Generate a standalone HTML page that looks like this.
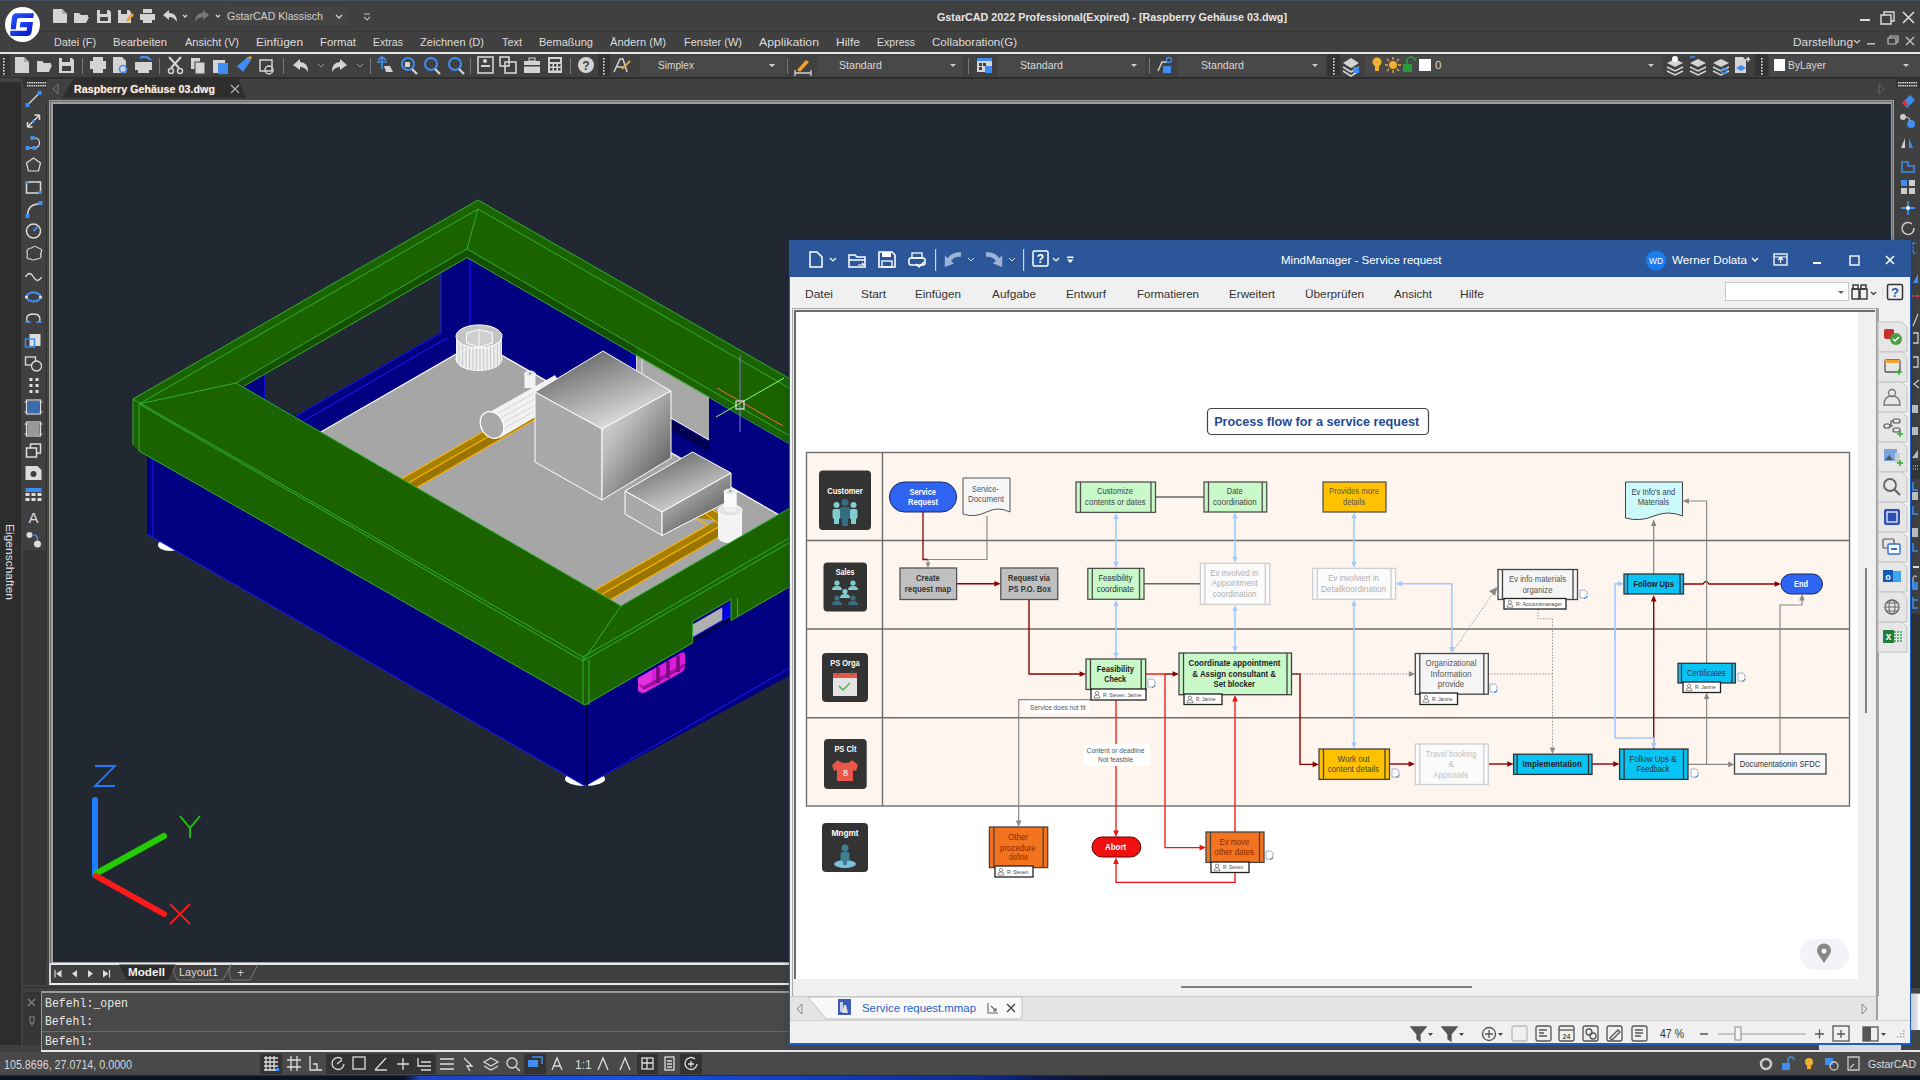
<!DOCTYPE html>
<html><head><meta charset="utf-8">
<style>
*{box-sizing:border-box;margin:0;padding:0}
html,body{width:1920px;height:1080px;overflow:hidden;background:#404040;font-family:"Liberation Sans",sans-serif}
.a{position:absolute}
.t{position:absolute;white-space:nowrap;line-height:normal}
svg{overflow:visible}
</style></head><body>
<div class="a" style="left:0;top:0;width:1920px;height:1080px;background:#404040;overflow:hidden">

<div class="a" style="left:0px;top:0px;width:1920px;height:52px;background:#404040;"></div>
<div class="a" style="left:0px;top:0px;width:1920px;height:1px;background:#465064;"></div>
<div class="a" style="left:0px;top:31px;width:1920px;height:1px;background:#383838;"></div>
<svg class="a" style="left:0px;top:0px;" width="45" height="45" viewBox="0 0 45 45"><defs><linearGradient id="lg1" x1="0" y1="0" x2="1" y2="1"><stop offset="0" stop-color="#2a5cff"/><stop offset="1" stop-color="#0010c8"/></linearGradient></defs><circle cx="22.5" cy="24.5" r="17.5" fill="#fff"/><path d="M17,13.2 L34,13.2 L33.2,18 L19,18 Q17.2,18 17,19.8 L15.8,29.2 L10.7,29.2 L11.9,17.5 Q12.5,13.2 17,13.2 Z" fill="url(#lg1)"/><path d="M10.3,30.8 L26.5,30.8 L27.2,27.3 L19.8,27.3 L20.5,22 L33,22 L31.6,32 Q30.9,35.9 27,35.9 L11.5,35.9 Q10,35.9 10.2,34 Z" fill="url(#lg1)"/></svg>
<div class="a" style="left:226px;top:6px;width:122px;height:20px;background:#444444;"></div>
<svg class="a" style="left:0px;top:0px;" width="400" height="40" viewBox="0 0 400 40"><path d="M53,9 h9 l5,5 v9 h-14 z" fill="#d4d4d4"/><path d="M62,9 v5 h5" fill="#aaa"/><path d="M74,13 h5 l2,2 h7 v2 h-12 l-2,6 z M76,17 h13 l-3,6 h-12 z" fill="#d4d4d4"/><path d="M97,10 h12 l2,2 v11 h-14 z" fill="#d4d4d4"/><rect x="100" y="10" width="7" height="4" fill="#404040"/><rect x="100" y="17" width="8" height="4" fill="#404040"/><path d="M118,10 h11 l2,2 v11 h-13 z" fill="#d4d4d4"/><rect x="121" y="10" width="6" height="4" fill="#404040"/><path d="M126,20 l6,-7 l2,2 l-6,7 z" fill="#f0a030"/><rect x="140" y="14" width="15" height="6" fill="#d4d4d4"/><rect x="143" y="9" width="9" height="4" fill="#d4d4d4"/><rect x="143" y="19" width="9" height="4" fill="#d4d4d4"/><path d="M163,15 l6,-5 v3 q8,0 8,9 q-3,-5 -8,-5 v3 z" fill="#d4d4d4"/><path d="M183,15 l2,2 l2,-2" stroke="#d4d4d4" fill="none" stroke-width="1.3"/><path d="M209,15 l-6,-5 v3 q-8,0 -8,9 q3,-5 8,-5 v3 z" fill="#777"/><path d="M216,15 l2,2 l2,-2" stroke="#d4d4d4" fill="none" stroke-width="1.3"/><path d="M336,15 l3,3 l3,-3" stroke="#d4d4d4" fill="none" stroke-width="1.3"/><path d="M364,14 h6 M364,17 l3,3 l3,-3" stroke="#bbb" fill="none" stroke-width="1.1"/></svg>
<div class="t" style="left:227.0px;top:9.7px;font-size:11.5px;color:#d0d0d0;font-weight:400;font-family:'Liberation Sans',sans-serif;transform:scaleX(0.9217);transform-origin:0 0;">GstarCAD Klassisch</div>
<div class="t" style="left:937.0px;top:10.7px;font-size:11.5px;color:#e6e6e6;font-weight:700;font-family:'Liberation Sans',sans-serif;transform:scaleX(0.9346);transform-origin:0 0;">GstarCAD 2022 Professional(Expired) - [Raspberry Gehäuse 03.dwg]</div>
<svg class="a" style="left:1850px;top:6px;" width="70" height="26" viewBox="0 0 70 26"><rect x="10" y="13" width="10" height="2" fill="#ddd"/><path d="M31,9 h10 v9 h-10 z M34,9 v-3 h10 v9 h-3" fill="none" stroke="#ddd" stroke-width="1.4"/><path d="M53,6 l11,11 M64,6 l-11,11" stroke="#ddd" stroke-width="1.6"/></svg>
<div class="t" style="left:54.0px;top:35.7px;font-size:11.5px;color:#dcdcdc;font-weight:400;font-family:'Liberation Sans',sans-serif;transform:scaleX(0.9391);transform-origin:0 0;">Datei (F)</div>
<div class="t" style="left:113.0px;top:35.7px;font-size:11.5px;color:#dcdcdc;font-weight:400;font-family:'Liberation Sans',sans-serif;transform:scaleX(0.9708);transform-origin:0 0;">Bearbeiten</div>
<div class="t" style="left:185.0px;top:35.7px;font-size:11.5px;color:#dcdcdc;font-weight:400;font-family:'Liberation Sans',sans-serif;transform:scaleX(0.9602);transform-origin:0 0;">Ansicht (V)</div>
<div class="t" style="left:256.0px;top:35.7px;font-size:11.5px;color:#dcdcdc;font-weight:400;font-family:'Liberation Sans',sans-serif;transform:scaleX(1.0353);transform-origin:0 0;">Einfügen</div>
<div class="t" style="left:320.0px;top:35.7px;font-size:11.5px;color:#dcdcdc;font-weight:400;font-family:'Liberation Sans',sans-serif;transform:scaleX(0.9885);transform-origin:0 0;">Format</div>
<div class="t" style="left:373.0px;top:35.7px;font-size:11.5px;color:#dcdcdc;font-weight:400;font-family:'Liberation Sans',sans-serif;transform:scaleX(0.9205);transform-origin:0 0;">Extras</div>
<div class="t" style="left:420.0px;top:35.7px;font-size:11.5px;color:#dcdcdc;font-weight:400;font-family:'Liberation Sans',sans-serif;transform:scaleX(0.9629);transform-origin:0 0;">Zeichnen (D)</div>
<div class="t" style="left:502.0px;top:35.7px;font-size:11.5px;color:#dcdcdc;font-weight:400;font-family:'Liberation Sans',sans-serif;transform:scaleX(0.9483);transform-origin:0 0;">Text</div>
<div class="t" style="left:539.0px;top:35.7px;font-size:11.5px;color:#dcdcdc;font-weight:400;font-family:'Liberation Sans',sans-serif;transform:scaleX(0.9600);transform-origin:0 0;">Bemaßung</div>
<div class="t" style="left:610.0px;top:35.7px;font-size:11.5px;color:#dcdcdc;font-weight:400;font-family:'Liberation Sans',sans-serif;transform:scaleX(0.9736);transform-origin:0 0;">Ändern (M)</div>
<div class="t" style="left:684.0px;top:35.7px;font-size:11.5px;color:#dcdcdc;font-weight:400;font-family:'Liberation Sans',sans-serif;transform:scaleX(0.9556);transform-origin:0 0;">Fenster (W)</div>
<div class="t" style="left:759.0px;top:35.7px;font-size:11.5px;color:#dcdcdc;font-weight:400;font-family:'Liberation Sans',sans-serif;transform:scaleX(1.0665);transform-origin:0 0;">Applikation</div>
<div class="t" style="left:836.0px;top:35.7px;font-size:11.5px;color:#dcdcdc;font-weight:400;font-family:'Liberation Sans',sans-serif;transform:scaleX(1.0433);transform-origin:0 0;">Hilfe</div>
<div class="t" style="left:877.0px;top:35.7px;font-size:11.5px;color:#dcdcdc;font-weight:400;font-family:'Liberation Sans',sans-serif;transform:scaleX(0.9148);transform-origin:0 0;">Express</div>
<div class="t" style="left:932.0px;top:35.7px;font-size:11.5px;color:#dcdcdc;font-weight:400;font-family:'Liberation Sans',sans-serif;transform:scaleX(1.0075);transform-origin:0 0;">Collaboration(G)</div>
<div class="t" style="left:1793.0px;top:35.7px;font-size:11.5px;color:#dcdcdc;font-weight:400;font-family:'Liberation Sans',sans-serif;transform:scaleX(1.0315);transform-origin:0 0;">Darstellung</div>
<svg class="a" style="left:1850px;top:34px;" width="70" height="16" viewBox="0 0 70 16"><path d="M4,6 l3,3 l3,-3" stroke="#ccc" fill="none" stroke-width="1.2"/><rect x="17" y="9" width="8" height="1.6" fill="#bbb"/><path d="M38,4 h8 v6 h-8 z M40,4 v-2 h8 v6 h-2" fill="none" stroke="#bbb" stroke-width="1.2"/><path d="M56,3 l8,8 M64,3 l-8,8" stroke="#bbb" stroke-width="1.5"/></svg>
<div class="a" style="left:0px;top:52px;width:1920px;height:2px;background:#e4e4e4;"></div>
<div class="a" style="left:0px;top:54px;width:1920px;height:24px;background:#404040;"></div>
<div class="a" style="left:0px;top:77px;width:1920px;height:2px;background:#2e2e2e;"></div>
<svg class="a" style="left:0px;top:0px;" width="1920" height="80" viewBox="0 0 1920 80"><rect x="0" y="54" width="10" height="22" fill="#353535"/><rect x="3" y="58" width="1.6" height="1.6" fill="#ddd"/><rect x="3" y="61" width="1.6" height="1.6" fill="#ddd"/><rect x="3" y="64" width="1.6" height="1.6" fill="#ddd"/><rect x="3" y="67" width="1.6" height="1.6" fill="#ddd"/><rect x="3" y="70" width="1.6" height="1.6" fill="#ddd"/><rect x="3" y="73" width="1.6" height="1.6" fill="#ddd"/><path d="M15,57 h9 l5,5 v11 h-14 z" fill="#d4d4d4"/><path d="M24,57 v5 h5" fill="#aaa"/><path d="M37,61 h5 l2,2 h7 v2 h-12 l-2,7 z M39,65 h13 l-3,7 h-12 z" fill="#d4d4d4"/><path d="M59,58 h13 l2,2 v13 h-15 z" fill="#d4d4d4"/><rect x="62" y="58" width="8" height="4" fill="#404040"/><rect x="62" y="66" width="9" height="5" fill="#404040"/><rect x="82" y="58" width="1" height="16" fill="#777"/><rect x="90" y="61" width="16" height="8" fill="#d4d4d4"/><rect x="93" y="57" width="10" height="4" fill="#d4d4d4"/><rect x="93" y="68" width="10" height="5" fill="#d4d4d4"/><path d="M113,57 h9 l4,4 v12 h-13 z" fill="#d4d4d4"/><circle cx="123" cy="69" r="3.5" fill="none" stroke="#3d8ef0" stroke-width="1.6"/><rect x="135" y="62" width="17" height="8" fill="#d4d4d4"/><path d="M140,58 q6,-3 11,2" stroke="#3d8ef0" stroke-width="2" fill="none"/><rect x="138" y="69" width="11" height="4" fill="#d4d4d4"/><rect x="159" y="58" width="1" height="16" fill="#777"/><path d="M169,57 l10,11 M181,57 l-10,11" stroke="#d4d4d4" stroke-width="2"/><circle cx="171" cy="71" r="2.5" fill="none" stroke="#d4d4d4" stroke-width="1.5"/><circle cx="180" cy="71" r="2.5" fill="none" stroke="#d4d4d4" stroke-width="1.5"/><rect x="191" y="58" width="9" height="11" fill="#d4d4d4"/><rect x="195" y="62" width="10" height="12" fill="#d4d4d4" stroke="#404040"/><rect x="213" y="60" width="12" height="13" fill="#d4d4d4"/><rect x="218" y="63" width="10" height="11" fill="#3d8ef0"/><path d="M237,66 l6,6 l8,-12 l-3,-3 z" fill="#3d8ef0"/><path d="M246,58 l5,-2 l1,3" fill="#f0a030"/><rect x="260" y="60" width="12" height="11" fill="none" stroke="#d4d4d4" stroke-width="1.5"/><circle cx="269" cy="70" r="4" fill="none" stroke="#d4d4d4" stroke-width="1.5"/><rect x="283" y="58" width="1" height="16" fill="#777"/><path d="M293,65 l7,-6 v3 q8,0 8,10 q-3,-5 -8,-5 v3 z" fill="#d4d4d4"/><path d="M318,64 l3,3 l3,-3" stroke="#999" fill="none"/><path d="M347,65 l-7,-6 v3 q-8,0 -8,10 q3,-5 8,-5 v3 z" fill="#d4d4d4"/><path d="M357,64 l3,3 l3,-3" stroke="#999" fill="none"/><rect x="370" y="58" width="1" height="16" fill="#777"/><path d="M378,60 l4,-3 l4,3 M382,57 v12 M377,62 h10" stroke="#3d8ef0" stroke-width="1.6" fill="none"/><path d="M384,66 h6 l3,6 h-7 z" fill="#d4d4d4"/><circle cx="408" cy="64" r="6" fill="none" stroke="#3d8ef0" stroke-width="2"/><path d="M412,69 l5,5" stroke="#d4d4d4" stroke-width="2.2"/><circle cx="431" cy="64" r="6" fill="none" stroke="#3d8ef0" stroke-width="2"/><path d="M435,69 l5,5" stroke="#d4d4d4" stroke-width="2.2"/><circle cx="455" cy="64" r="6" fill="none" stroke="#3d8ef0" stroke-width="2"/><path d="M459,69 l5,5" stroke="#d4d4d4" stroke-width="2.2"/><rect x="405" y="62" width="5" height="5" fill="#d4d4d4"/><rect x="470" y="58" width="1" height="16" fill="#777"/><rect x="478" y="57" width="15" height="16" fill="none" stroke="#d4d4d4" stroke-width="1.6"/><rect x="481" y="65" width="9" height="2" fill="#d4d4d4"/><circle cx="485" cy="61" r="2" fill="#d4d4d4"/><rect x="500" y="57" width="9" height="9" fill="none" stroke="#d4d4d4" stroke-width="1.6"/><rect x="505" y="62" width="11" height="11" fill="none" stroke="#d4d4d4" stroke-width="1.6"/><rect x="524" y="61" width="16" height="12" fill="#d4d4d4"/><rect x="529" y="58" width="6" height="3" fill="none" stroke="#d4d4d4"/><rect x="524" y="65" width="16" height="1.5" fill="#404040"/><rect x="548" y="57" width="14" height="16" fill="#d4d4d4"/><g fill="#404040"><rect x="550" y="59" width="10" height="3"/><rect x="550" y="64" width="2.5" height="2.5"/><rect x="554" y="64" width="2.5" height="2.5"/><rect x="558" y="64" width="2.5" height="2.5"/><rect x="550" y="68" width="2.5" height="2.5"/><rect x="554" y="68" width="2.5" height="2.5"/><rect x="558" y="68" width="2.5" height="2.5"/></g><rect x="570" y="58" width="1" height="16" fill="#777"/><circle cx="586" cy="65" r="8" fill="#d4d4d4"/><text x="586" y="70" font-size="12" font-weight="700" text-anchor="middle" fill="#404040" font-family="Liberation Sans">?</text><rect x="598" y="54" width="12" height="22" fill="#333"/><rect x="603" y="58" width="1.6" height="1.6" fill="#ddd"/><rect x="603" y="61" width="1.6" height="1.6" fill="#ddd"/><rect x="603" y="64" width="1.6" height="1.6" fill="#ddd"/><rect x="603" y="67" width="1.6" height="1.6" fill="#ddd"/><rect x="603" y="70" width="1.6" height="1.6" fill="#ddd"/><rect x="603" y="73" width="1.6" height="1.6" fill="#ddd"/><path d="M614,72 l6,-13 l3,0 l4,13 M617,67 h7" stroke="#d4d4d4" stroke-width="1.5" fill="none"/><path d="M622,69 l8,-8" stroke="#f0a030" stroke-width="2"/><rect x="640" y="56" width="145" height="20" fill="#484848"/><path d="M769,64 l3,3 l3,-3" fill="#ccc"/><path d="M769,64 h6 l-3,3 z" fill="#ccc"/><rect x="787" y="58" width="1" height="16" fill="#777"/><path d="M795,73 h16 M795,70 v6 M811,70 v6" stroke="#d4d4d4" stroke-width="1.3" fill="none"/><path d="M797,70 l9,-10 l3,2 l-9,10 z" fill="#f0a030"/><rect x="817" y="56" width="145" height="20" fill="#484848"/><path d="M950,64 h6 l-3,3 z" fill="#ccc"/><rect x="968" y="58" width="1" height="16" fill="#777"/><rect x="977" y="58" width="15" height="14" fill="#d4d4d4"/><rect x="977" y="58" width="15" height="3" fill="#3d8ef0"/><g fill="#404040"><rect x="979" y="63" width="3" height="3"/><rect x="983" y="63" width="3" height="3"/><rect x="979" y="67" width="3" height="3"/></g><rect x="985" y="66" width="7" height="7" fill="#3d8ef0"/><rect x="998" y="56" width="147" height="20" fill="#484848"/><path d="M1131,64 h6 l-3,3 z" fill="#ccc"/><rect x="1149" y="58" width="1" height="16" fill="#777"/><path d="M1158,71 l4,-9 h5" stroke="#d4d4d4" stroke-width="1.4" fill="none"/><circle cx="1169" cy="60" r="2.5" fill="none" stroke="#3d8ef0" stroke-width="1.3"/><rect x="1163" y="66" width="8" height="7" fill="#3d8ef0"/><rect x="1178" y="56" width="147" height="20" fill="#484848"/><path d="M1312,64 h6 l-3,3 z" fill="#ccc"/><rect x="1327" y="54" width="13" height="22" fill="#333"/><rect x="1333" y="58" width="1.6" height="1.6" fill="#ddd"/><rect x="1333" y="61" width="1.6" height="1.6" fill="#ddd"/><rect x="1333" y="64" width="1.6" height="1.6" fill="#ddd"/><rect x="1333" y="67" width="1.6" height="1.6" fill="#ddd"/><rect x="1333" y="70" width="1.6" height="1.6" fill="#ddd"/><rect x="1333" y="73" width="1.6" height="1.6" fill="#ddd"/><path d="M1343,63 l8,-5 l8,5 l-8,5 z" fill="#d4d4d4"/><path d="M1343,67 l8,5 l8,-5 M1343,71 l8,5 l8,-5" stroke="#d4d4d4" stroke-width="1.5" fill="none"/><rect x="1353" y="67" width="6" height="6" fill="#3d8ef0"/><rect x="1365" y="56" width="298" height="20" fill="#484848"/><circle cx="1377" cy="62" r="4.5" fill="#f0b030"/><rect x="1375" y="66" width="4" height="5" fill="#f0b030"/><circle cx="1393" cy="65" r="4" fill="#f0b030"/><g stroke="#f0b030" stroke-width="1.3"><path d="M1393,57 v3 M1393,70 v3 M1385,65 h3 M1398,65 h3 M1387,59 l2,2 M1397,69 l2,2 M1387,71 l2,-2 M1397,61 l2,-2"/></g><rect x="1403" y="64" width="9" height="8" fill="#2a9d3a"/><path d="M1407,64 v-3 q0,-4 4,-4 q4,0 4,4" stroke="#2a9d3a" stroke-width="1.6" fill="none"/><rect x="1419" y="59" width="12" height="12" fill="#fff"/><path d="M1648,64 h6 l-3,3 z" fill="#ccc"/><path d="M1667,63 l8,-4 l8,4 l-8,4 z" fill="#d4d4d4"/><path d="M1667,67 l8,4 l8,-4 M1667,71 l8,4 l8,-4" stroke="#d4d4d4" stroke-width="1.5" fill="none"/><path d="M1690,63 l8,-4 l8,4 l-8,4 z" fill="#d4d4d4"/><path d="M1690,67 l8,4 l8,-4 M1690,71 l8,4 l8,-4" stroke="#d4d4d4" stroke-width="1.5" fill="none"/><path d="M1713,63 l8,-4 l8,4 l-8,4 z" fill="#d4d4d4"/><path d="M1713,67 l8,4 l8,-4 M1713,71 l8,4 l8,-4" stroke="#d4d4d4" stroke-width="1.5" fill="none"/><circle cx="1675" cy="59" r="3" fill="#fff"/><path d="M1690,57 h5" stroke="#3d8ef0" stroke-width="1.5"/><circle cx="1724" cy="71" r="2.5" fill="none" stroke="#3d8ef0" stroke-width="1.5"/><path d="M1735,57 h8 l3,3 v13 h-11 z" fill="#d4d4d4"/><path d="M1736,68 l5,-3 l5,3 l-5,3 z" fill="#3d8ef0"/><path d="M1748,62 v-4 l-2,2 M1748,58 l2,2" stroke="#ddd" stroke-width="1.2" fill="none"/><rect x="1755" y="54" width="13" height="22" fill="#333"/><rect x="1761" y="58" width="1.6" height="1.6" fill="#ddd"/><rect x="1761" y="61" width="1.6" height="1.6" fill="#ddd"/><rect x="1761" y="64" width="1.6" height="1.6" fill="#ddd"/><rect x="1761" y="67" width="1.6" height="1.6" fill="#ddd"/><rect x="1761" y="70" width="1.6" height="1.6" fill="#ddd"/><rect x="1761" y="73" width="1.6" height="1.6" fill="#ddd"/><rect x="1770" y="56" width="150" height="20" fill="#484848"/><rect x="1774" y="59" width="11" height="12" fill="#fff"/><path d="M1903,64 h6 l-3,3 z" fill="#ccc"/></svg>
<div class="t" style="left:658.0px;top:58.7px;font-size:11.5px;color:#d8d8d8;font-weight:400;font-family:'Liberation Sans',sans-serif;transform:scaleX(0.8802);transform-origin:0 0;">Simplex</div>
<div class="t" style="left:839.0px;top:58.7px;font-size:11.5px;color:#d8d8d8;font-weight:400;font-family:'Liberation Sans',sans-serif;transform:scaleX(0.9213);transform-origin:0 0;">Standard</div>
<div class="t" style="left:1020.0px;top:58.7px;font-size:11.5px;color:#d8d8d8;font-weight:400;font-family:'Liberation Sans',sans-serif;transform:scaleX(0.9213);transform-origin:0 0;">Standard</div>
<div class="t" style="left:1201.0px;top:58.7px;font-size:11.5px;color:#d8d8d8;font-weight:400;font-family:'Liberation Sans',sans-serif;transform:scaleX(0.9213);transform-origin:0 0;">Standard</div>
<div class="t" style="left:1435.0px;top:58.7px;font-size:11.5px;color:#d8d8d8;font-weight:400;font-family:'Liberation Sans',sans-serif;">0</div>
<div class="t" style="left:1788.0px;top:58.7px;font-size:11.5px;color:#d8d8d8;font-weight:400;font-family:'Liberation Sans',sans-serif;transform:scaleX(0.9008);transform-origin:0 0;">ByLayer</div>
<div class="a" style="left:0px;top:79px;width:1920px;height:21px;background:#404040;"></div>
<svg class="a" style="left:0px;top:78px;" width="1920" height="22" viewBox="0 0 1920 22"><path d="M58,6 l-5,5 l5,5 z" fill="none" stroke="#777" stroke-width="1"/><path d="M62,20 l10,-17 q2,-3 6,-3 h160 l8,20 z" fill="#2e2e2e"/><path d="M231,7 l8,8 M239,7 l-8,8" stroke="#aaa" stroke-width="1.3"/><path d="M1879,6 l5,5 l-5,5 z" fill="none" stroke="#666" stroke-width="1"/></svg>
<div class="t" style="left:74.0px;top:82.7px;font-size:11.5px;color:#f0f0f0;font-weight:700;font-family:'Liberation Sans',sans-serif;transform:scaleX(0.9348);transform-origin:0 0;text-shadow:0 0 1px #c08040;">Raspberry Gehäuse 03.dwg</div>
<div class="a" style="left:0px;top:78px;width:21px;height:5px;background:#444;"></div>
<div class="a" style="left:0px;top:82px;width:21px;height:963px;background:#2d2d2d;"></div>
<div class="t" style="left:14.5px;top:524px;font-size:11px;line-height:11px;color:#e0e0e0;transform:rotate(90deg) scaleX(1.09);transform-origin:0 0;">Eigenschaften</div>
<div class="a" style="left:21px;top:79px;width:26px;height:972px;background:#404040;"></div>
<div class="a" style="left:46px;top:100px;width:1px;height:864px;background:#2e2e2e;"></div>
<div class="a" style="left:47px;top:100px;width:2px;height:864px;background:#474747;"></div>
<div class="a" style="left:23px;top:78px;width:24px;height:10px;background:#333;"></div>
<div class="a" style="left:23px;top:550px;width:23px;height:495px;background:#353535;"></div>
<svg class="a" style="left:0px;top:0px;" width="60" height="560" viewBox="0 0 60 560"><rect x="27.0" y="82" width="1.5" height="1.5" fill="#ddd"/><rect x="27.0" y="85" width="1.5" height="1.5" fill="#ddd"/><rect x="29.2" y="82" width="1.5" height="1.5" fill="#ddd"/><rect x="29.2" y="85" width="1.5" height="1.5" fill="#ddd"/><rect x="31.4" y="82" width="1.5" height="1.5" fill="#ddd"/><rect x="31.4" y="85" width="1.5" height="1.5" fill="#ddd"/><rect x="33.6" y="82" width="1.5" height="1.5" fill="#ddd"/><rect x="33.6" y="85" width="1.5" height="1.5" fill="#ddd"/><rect x="35.8" y="82" width="1.5" height="1.5" fill="#ddd"/><rect x="35.8" y="85" width="1.5" height="1.5" fill="#ddd"/><rect x="38.0" y="82" width="1.5" height="1.5" fill="#ddd"/><rect x="38.0" y="85" width="1.5" height="1.5" fill="#ddd"/><rect x="40.2" y="82" width="1.5" height="1.5" fill="#ddd"/><rect x="40.2" y="85" width="1.5" height="1.5" fill="#ddd"/><rect x="42.4" y="82" width="1.5" height="1.5" fill="#ddd"/><rect x="42.4" y="85" width="1.5" height="1.5" fill="#ddd"/><rect x="44.6" y="82" width="1.5" height="1.5" fill="#ddd"/><rect x="44.6" y="85" width="1.5" height="1.5" fill="#ddd"/><g transform="translate(33.5,99)"><path d="M-6,6 L6,-6" stroke="#ddd" stroke-width="1.2"/><rect x="-8" y="4" width="4" height="4" fill="#3d8ef0"/><rect x="4" y="-8" width="4" height="4" fill="#3d8ef0"/></g><g transform="translate(33.5,121)"><path d="M-6,6 L6,-6 M-6,6 l0,-5 M-6,6 l5,0 M6,-6 l0,5 M6,-6 l-5,0" stroke="#ddd" stroke-width="1.5" fill="none"/><circle cx="0" cy="0" r="1.5" fill="#3d8ef0"/></g><g transform="translate(33.5,143)"><path d="M-6,5 h6 q6,0 6,-5 q0,-5 -5,-5" stroke="#ddd" stroke-width="1.2" fill="none"/><rect x="-8" y="3" width="4" height="4" fill="#3d8ef0"/><rect x="-1" y="3" width="4" height="4" fill="#3d8ef0"/><rect x="-3" y="-7" width="4" height="4" fill="#3d8ef0"/></g><g transform="translate(33.5,165)"><path d="M0,-7 L7,-2 L5,6 L-5,6 L-7,-2 Z" stroke="#ddd" stroke-width="1.2" fill="none"/></g><g transform="translate(33.5,187)"><rect x="-7" y="-5" width="14" height="11" stroke="#ddd" stroke-width="1.5" fill="none"/><rect x="-8" y="-6" width="3" height="3" fill="#3d8ef0"/><rect x="5" y="4" width="3" height="3" fill="#3d8ef0"/></g><g transform="translate(33.5,209)"><path d="M-6,7 q0,-12 12,-12" stroke="#ddd" stroke-width="1.5" fill="none"/><rect x="-8" y="5" width="4" height="4" fill="#3d8ef0"/><rect x="5" y="-8" width="4" height="4" fill="#3d8ef0"/></g><g transform="translate(33.5,231)"><circle cx="0" cy="0" r="7" stroke="#ddd" stroke-width="1.5" fill="none"/><path d="M0,0 l4,-4" stroke="#3d8ef0" stroke-width="2"/></g><g transform="translate(33.5,253)"><path d="M-6,2 q-2,-7 4,-7 q3,-3 7,0 q5,1 2,6 q2,5 -4,5 q-3,2 -6,0 q-5,0 -3,-4" stroke="#ddd" stroke-width="1.2" fill="none"/></g><g transform="translate(33.5,275)"><path d="M-8,2 q4,-7 8,0 q4,7 8,0" stroke="#ddd" stroke-width="1.3" fill="none"/></g><g transform="translate(33.5,297)"><ellipse cx="0" cy="0" rx="7" ry="4.5" stroke="#3d8ef0" stroke-width="2.2" fill="none"/><circle cx="-7" cy="0" r="1.6" fill="#ddd"/><circle cx="7" cy="0" r="1.6" fill="#ddd"/></g><g transform="translate(33.5,319)"><path d="M-6,3 q-3,-8 6,-8 q8,0 6,8" stroke="#ddd" stroke-width="1.3" fill="none"/><path d="M-8,3 h5 M3,3 h5" stroke="#3d8ef0" stroke-width="2"/></g><g transform="translate(33.5,341)"><rect x="-4" y="-7" width="11" height="12" fill="#ddd"/><rect x="-8" y="-2" width="9" height="8" fill="none" stroke="#3d8ef0" stroke-width="1.5"/></g><g transform="translate(33.5,363)"><rect x="-8" y="-6" width="10" height="8" fill="none" stroke="#ddd" stroke-width="1.3"/><circle cx="3" cy="3" r="5" fill="#404040" stroke="#ddd" stroke-width="1.3"/></g><g transform="translate(33.5,385)"><g fill="#ddd"><rect x="-4" y="-7" width="3" height="3"/><rect x="2" y="-7" width="3" height="3"/><rect x="-4" y="-1" width="3" height="3"/><rect x="2" y="-1" width="3" height="3"/><rect x="-4" y="5" width="3" height="3"/><rect x="2" y="5" width="3" height="3"/></g></g><g transform="translate(33.5,407)"><rect x="-6" y="-6" width="12" height="12" fill="#3d6bb0"/><rect x="-7" y="-7" width="14" height="14" fill="none" stroke="#ddd" stroke-width="1.2"/><path d="M-9,-5 h3 M6,-5 h3 M-9,5 h3 M6,5 h3" stroke="#ddd"/></g><g transform="translate(33.5,429)"><rect x="-6" y="-6" width="12" height="12" fill="#999"/><rect x="-7" y="-7" width="14" height="14" fill="none" stroke="#ddd" stroke-width="1.2"/><path d="M-9,-5 h3 M6,-5 h3 M-9,5 h3 M6,5 h3" stroke="#ddd"/></g><g transform="translate(33.5,451)"><rect x="-3" y="-7" width="10" height="9" fill="none" stroke="#ddd" stroke-width="1.5"/><rect x="-7" y="-3" width="10" height="9" fill="#404040" stroke="#ddd" stroke-width="1.5"/></g><g transform="translate(33.5,473)"><path d="M-8,-7 h12 l4,4 v10 h-16 z" fill="#ddd"/><circle cx="0" cy="1" r="3" fill="#404040"/></g><g transform="translate(33.5,495)"><rect x="-8" y="-7" width="16" height="4" fill="#3d8ef0"/><g fill="#ddd"><rect x="-8" y="-2" width="4" height="3"/><rect x="-2" y="-2" width="4" height="3"/><rect x="4" y="-2" width="4" height="3"/><rect x="-8" y="3" width="4" height="3"/><rect x="-2" y="3" width="4" height="3"/><rect x="4" y="3" width="4" height="3"/></g></g><g transform="translate(33.5,517)"><text x="0" y="6" font-size="15" font-family="Liberation Sans" text-anchor="middle" fill="#ddd">A</text></g><g transform="translate(33.5,539)"><circle cx="-4" cy="-4" r="3" fill="#ddd"/><circle cx="4" cy="5" r="3.5" fill="#ddd"/><path d="M0,-4 q4,0 4,5" stroke="#3d8ef0" stroke-width="1.5" fill="none"/></g></svg>
<div class="a" style="left:1894px;top:79px;width:26px;height:972px;background:#404040;"></div>
<div class="a" style="left:1896px;top:78px;width:24px;height:10px;background:#333;"></div>
<svg class="a" style="left:0px;top:0px;" width="1920" height="240" viewBox="0 0 1920 240"><rect x="1898.0" y="82" width="1.5" height="1.5" fill="#ddd"/><rect x="1898.0" y="85" width="1.5" height="1.5" fill="#ddd"/><rect x="1900.2" y="82" width="1.5" height="1.5" fill="#ddd"/><rect x="1900.2" y="85" width="1.5" height="1.5" fill="#ddd"/><rect x="1902.4" y="82" width="1.5" height="1.5" fill="#ddd"/><rect x="1902.4" y="85" width="1.5" height="1.5" fill="#ddd"/><rect x="1904.6" y="82" width="1.5" height="1.5" fill="#ddd"/><rect x="1904.6" y="85" width="1.5" height="1.5" fill="#ddd"/><rect x="1906.8" y="82" width="1.5" height="1.5" fill="#ddd"/><rect x="1906.8" y="85" width="1.5" height="1.5" fill="#ddd"/><rect x="1909.0" y="82" width="1.5" height="1.5" fill="#ddd"/><rect x="1909.0" y="85" width="1.5" height="1.5" fill="#ddd"/><rect x="1911.2" y="82" width="1.5" height="1.5" fill="#ddd"/><rect x="1911.2" y="85" width="1.5" height="1.5" fill="#ddd"/><rect x="1913.4" y="82" width="1.5" height="1.5" fill="#ddd"/><rect x="1913.4" y="85" width="1.5" height="1.5" fill="#ddd"/><rect x="1915.6" y="82" width="1.5" height="1.5" fill="#ddd"/><rect x="1915.6" y="85" width="1.5" height="1.5" fill="#ddd"/><path d="M1902,103 l8,-8 l5,5 l-8,8 z" fill="#3d8ef0"/><path d="M1902,103 l3,3 h4 l-4,-6 z" fill="#e03030"/><circle cx="1903" cy="117" r="3" fill="#ccc"/><circle cx="1911" cy="124" r="4" fill="#3d8ef0"/><path d="M1906,117 q4,0 4,4" stroke="#ccc" fill="none"/><path d="M1905,148 l-4,0 l4,-10 z" fill="#ccc"/><path d="M1909,148 l4,0 l-4,-10 z" fill="#3d8ef0"/><path d="M1902,172 v-10 h6 v4 h6 v6 z" fill="none" stroke="#3d8ef0" stroke-width="1.5"/><rect x="1901" y="180" width="6" height="6" fill="#3d8ef0"/><rect x="1909" y="180" width="6" height="6" fill="#ccc"/><rect x="1901" y="188" width="6" height="6" fill="#ccc"/><rect x="1909" y="188" width="6" height="6" fill="#ccc"/><path d="M1908,201 v14 M1901,208 h14" stroke="#3d8ef0" stroke-width="1.8"/><circle cx="1908" cy="208" r="2" fill="#fff"/><path d="M1914,228 a6,6 0 1 1 -2,-4" stroke="#ccc" stroke-width="1.5" fill="none"/></svg>
<div class="a" style="left:49px;top:100px;width:1845px;height:865px;background:#9e9e9e;"></div>
<div class="a" style="left:50px;top:101px;width:1843px;height:863px;background:#6a6a6a;"></div>
<div class="a" style="left:51px;top:102px;width:1841px;height:861px;background:#a0a0a0;"></div>
<div class="a" style="left:53px;top:104px;width:1838px;height:858px;background:#222831;"></div>
<svg class="a" style="left:0;top:0" width="1920" height="1080"><defs>
 <clipPath id="vp"><rect x="53" y="104" width="1838" height="858"/></clipPath>
 <clipPath id="hole"><polygon points="236,383 467,249 852,472 621,606"/></clipPath>
 <linearGradient id="cubeTop" x1="0.1" y1="0" x2="0.75" y2="1">
  <stop offset="0" stop-color="#555"/><stop offset="0.85" stop-color="#d6d6d6"/><stop offset="1" stop-color="#dadada"/></linearGradient>
 <linearGradient id="cubeR" x1="0" y1="0.1" x2="0.8" y2="1">
  <stop offset="0" stop-color="#dcdcdc"/><stop offset="0.35" stop-color="#b8b8b8"/><stop offset="1" stop-color="#555"/></linearGradient>
 <linearGradient id="boxTop" x1="0.1" y1="0" x2="0.75" y2="1">
  <stop offset="0" stop-color="#555"/><stop offset="0.85" stop-color="#d0d0d0"/><stop offset="1" stop-color="#d6d6d6"/></linearGradient>
 <linearGradient id="boxR" x1="0" y1="0" x2="0.8" y2="1">
  <stop offset="0" stop-color="#d8d8d8"/><stop offset="1" stop-color="#4a4a4a"/></linearGradient>
</defs>
<g clip-path="url(#vp)">
 <!-- feet -->
 <ellipse cx="170" cy="545" rx="12" ry="6" fill="#fff"/>
 <ellipse cx="585" cy="779" rx="20" ry="7" fill="#fff"/>
 <!-- blue box outer faces -->
 <polygon points="147,452 585,705 800,581 800,670 585,786 147,534" fill="#000080"/>
 <line x1="147" y1="534" x2="585" y2="786" stroke="#1a1aff" stroke-width="1"/>
 <line x1="585" y1="786" x2="800" y2="662" stroke="#1a1aff" stroke-width="1"/>
 <line x1="153" y1="455" x2="153" y2="537" stroke="#1a1aff" stroke-width="1"/>
 <line x1="587" y1="706" x2="587" y2="786" stroke="#000040" stroke-width="2"/>
 <!-- hole contents -->
 <g clip-path="url(#hole)">
  <rect x="200" y="240" width="700" height="400" fill="#000080"/>
  <polygon points="265,374 441,272 441,332 295,416 265,399" fill="#222831"/>
  <line x1="265" y1="374" x2="265" y2="400" stroke="#1a1aff" stroke-width="1"/>
  <line x1="441" y1="272" x2="441" y2="333" stroke="#1a1aff" stroke-width="1"/>
  <line x1="296" y1="416" x2="441" y2="333" stroke="#1a1aff" stroke-width="1"/>
  <line x1="300" y1="423" x2="447" y2="338" stroke="#1a1aff" stroke-width="1"/>
  <line x1="470" y1="258" x2="470" y2="330" stroke="#1a1aff" stroke-width="1"/>
  <!-- gray back panel -->
  <polygon points="636,330 709,372 709,440 636,398" fill="#a8a8a8"/>
  <polyline points="636,330 636,398 709,440" fill="none" stroke="#fff" stroke-width="1"/><line x1="642" y1="330" x2="642" y2="400" stroke="#e8e8e8" stroke-width="1"/><polygon points="629,330 636,334 636,398 629,394" fill="#0000b0"/><line x1="671" y1="423" x2="709" y2="445" stroke="#fff" stroke-width="1"/>
  <polygon points="671,420 709,442 709,452 671,430" fill="#000050"/>
  <!-- plate -->
  <polygon points="478,341.5 900,585 478,829 56,585" fill="#a6a6a6"/>
  <polyline points="300,444 478,341.5 800,527" fill="none" stroke="#fff" stroke-width="1.2"/>
  <!-- orange tracks -->
  <polygon points="390,485.4 545,396 545,413.7 390,503" fill="#a88000"/>
  <polygon points="390,493.5 545,404 545,413.7 390,503" fill="#9a7400"/>
  <g stroke="#ffb400" stroke-width="1.1">
   <line x1="390" y1="485.4" x2="545" y2="396"/><line x1="390" y1="493.5" x2="545" y2="404"/><line x1="390" y1="503" x2="545" y2="413.7"/>
  </g>
  <polygon points="590,592.9 716.7,520.6 695.6,517.8 711.7,509.4 725,517 725,533.5 590,611.4" fill="#a88000"/>
  <polygon points="590,601.3 721,525.6 725,528 725,533.5 590,611.4" fill="#9a7400"/>
  <g stroke="#ffb400" stroke-width="1.1" fill="none">
   <polyline points="590,592.9 707.8,525 695.6,517.8 711.7,509.4 725,517"/>
   <polyline points="590,601.3 721,525.6 704.4,512.8"/>
   <line x1="590" y1="611.4" x2="725" y2="533.5"/>
  </g>
  <!-- knob -->
  <rect x="456" y="336.4" width="46" height="23" fill="#ececec"/>
  <ellipse cx="479" cy="359" rx="23" ry="11.5" fill="#ececec" stroke="#fff"/>
  <g stroke="#b8b8b8" stroke-width="0.7">
   <line x1="459" y1="342" x2="459" y2="364"/><line x1="462.5" y1="344" x2="462.5" y2="366"/><line x1="466" y1="345" x2="466" y2="368"/><line x1="469.5" y1="346" x2="469.5" y2="369"/><line x1="473" y1="347" x2="473" y2="370"/><line x1="476.5" y1="348" x2="476.5" y2="370.5"/><line x1="480" y1="348" x2="480" y2="370.5"/><line x1="483.5" y1="348" x2="483.5" y2="370.5"/><line x1="487" y1="347" x2="487" y2="370"/><line x1="490.5" y1="346" x2="490.5" y2="369"/><line x1="494" y1="345" x2="494" y2="368"/><line x1="497.5" y1="344" x2="497.5" y2="366"/><line x1="500.5" y1="342" x2="500.5" y2="364"/>
  </g>
  <ellipse cx="479" cy="336.4" rx="23" ry="11.5" fill="#c4c4c4" stroke="#fff"/>
  <polygon points="466.5,333 479,329.4 492.3,333 492.3,343 479,347.3 466.5,343" fill="#cfcfcf" stroke="#fff" stroke-width="1"/>
  <line x1="479" y1="329.4" x2="479" y2="347.3" stroke="#fff" stroke-width="0.8"/>
  <!-- post -->
  <rect x="524.5" y="374" width="11" height="14" fill="#f4f4f4"/><ellipse cx="530" cy="374" rx="5.5" ry="3" fill="#e8e8e8" stroke="#fff" stroke-width="0.8"/><circle cx="530" cy="373.5" r="1.2" fill="#999"/>
  <!-- rod -->
  <polygon points="488,413 555,375 568,398 500,438" fill="#f2f2f2"/>
  <g stroke="#b8b8b8" stroke-width="0.5">
   <line x1="490" y1="418" x2="557" y2="380"/><line x1="492" y1="423" x2="560" y2="385"/><line x1="494" y1="428" x2="562" y2="390"/><line x1="496" y1="433" x2="565" y2="394"/>
  </g>
  <ellipse cx="492" cy="425" rx="11" ry="14" transform="rotate(-30 492 425)" fill="#a8a8a8" stroke="#fff" stroke-width="1.2"/>
  <!-- cube -->
  <polygon points="603,351 671,391 602,429 535,392" fill="url(#cubeTop)" stroke="#fff" stroke-width="1"/>
  <polygon points="535,392 602,429 602,500 535,462" fill="#a9a9a9" stroke="#fff" stroke-width="1"/>
  <polygon points="602,429 671,391 671,458 602,500" fill="url(#cubeR)" stroke="#fff" stroke-width="1"/>
  <!-- small box -->
  <polygon points="692.5,452 731,473 662,512 625,491" fill="url(#boxTop)" stroke="#fff" stroke-width="1"/>
  <polygon points="625,491 662,512 662,535.5 625,514" fill="#a9a9a9" stroke="#fff" stroke-width="1"/>
  <polygon points="662,512 731,473 731,500 662,535.5" fill="url(#boxR)" stroke="#fff" stroke-width="1"/>
  <!-- standoff -->
  <rect x="718" y="510.5" width="24" height="26.7" fill="#f4f4f4"/>
  <ellipse cx="730" cy="537.2" rx="12" ry="6" fill="#f4f4f4"/>
  <ellipse cx="730" cy="510.5" rx="12" ry="6" fill="#e4e4e4" stroke="#fff"/>
  <rect x="724" y="492" width="12.7" height="18" fill="#fafafa"/>
  <ellipse cx="730.3" cy="510" rx="6.4" ry="3" fill="#f0f0f0" stroke="#ddd" stroke-width="0.6"/>
  <ellipse cx="730.3" cy="492" rx="6.4" ry="3" fill="#e8e8e8" stroke="#fff"/>
  <circle cx="730.3" cy="491" r="1.5" fill="#aaa"/>
 </g>
 <!-- green frame top surface -->
 <path d="M133,399 L478,200 L928,458 L583,657 Z M236,383 L621,606 L852,472 L467,249 Z" fill="#1b6300" fill-rule="evenodd"/>
 <polygon points="236,383 467,249 467,257.5 244,386" fill="#145000"/>
 <!-- green front faces -->
 <polygon points="133,399 583,657 585,705 139,451 133,445" fill="#1b6300"/>
 <polygon points="583,657 928,458 928,507 731,620.5 731,599.3 692.6,621.5 692.6,642.9 585,705" fill="#1b6300"/>
 <polygon points="467,249 852,471 852,479 467,257.5" fill="#1b6300"/>
 <polygon points="467,249 636,346.5 636,354.5 467,257.5" fill="#145000"/>
 <!-- notch -->
 <polygon points="692.6,621.5 731,599.3 731,620.5 692.6,642.9" fill="#000080"/>
 <polygon points="692.6,624.5 722.5,607.3 722.5,620 692.6,637.5" fill="#b0b0b0"/>
 <polygon points="722.5,607.3 731,602.5 731,616 722.5,620.5" fill="#0000e0"/>
 <polygon points="692.6,637.5 722.5,620.3 731,616 731,620.5 692.6,642.9" fill="#000050"/>
 <line x1="692.6" y1="637.5" x2="731" y2="615.5" stroke="#2020ff" stroke-width="1"/>
 <!-- magenta connector -->
 <path d="M638,678 L681,653 Q685,651 685,655 L685,667 Q685,670 682,672 L646,692 Q640,694 638,690 Z" fill="#dc1cdc"/>
 <path d="M638,678 L652,670 L652,686 L646,692 Q640,694 638,690 Z" fill="#e030e0"/>
 <path d="M638,684 L644,690 L685,667 L685,663 L644,686 Z" fill="#9a109a"/>
 <g stroke="#7a0a7a" stroke-width="3.6"><line x1="658" y1="667" x2="658" y2="683"/><line x1="668" y1="661" x2="668" y2="678"/><line x1="678" y1="655.5" x2="678" y2="672"/></g>
 <!-- green edges -->
 <g stroke="#2fb02f" stroke-width="1" fill="none">
  <polyline points="133,399 478,200 928,458"/>
  <polyline points="139,404 478,209 928,468"/>
  <polyline points="133,399 583,657 928,458"/>
  <polyline points="139,404 583,661 928,463"/>
  <polyline points="236,383 467,249 852,472"/>
  <polyline points="244,386 467,257.5 852,480"/>
  <polyline points="236,383 621,606 852,472"/>
  <line x1="139" y1="404" x2="236" y2="383"/>
  <line x1="478" y1="209" x2="467" y2="249"/>
  <line x1="583" y1="661" x2="621" y2="606"/>
  <line x1="133" y1="399" x2="133" y2="445"/>
  <line x1="139" y1="404" x2="139" y2="451"/>
  <line x1="583" y1="657" x2="583" y2="705"/>
  <line x1="589" y1="660" x2="589" y2="705"/>
  <polyline points="139,451 585,705 692.6,642.9"/>
  <polyline points="692.6,642.9 692.6,621.5 731,599.3 731,620.5 928,507"/><line x1="737.5" y1="598" x2="737.5" y2="616.8"/>
 </g>
 <!-- crosshair cursor -->
 <line x1="740" y1="355" x2="740" y2="432" stroke="#7f7fd0" stroke-width="1"/>
 <line x1="716" y1="417" x2="784" y2="378" stroke="#80ff80" stroke-width="1"/>
 <line x1="717" y1="388" x2="783" y2="426" stroke="#ff6060" stroke-width="1"/>
 <rect x="736" y="401" width="8" height="8" fill="none" stroke="#ddd" stroke-width="1.2"/>
 <!-- UCS icon -->
 <line x1="95" y1="800" x2="95" y2="875" stroke="#1e7cff" stroke-width="6" stroke-linecap="round"/>
 <line x1="97" y1="873" x2="164" y2="836" stroke="#22cc00" stroke-width="6" stroke-linecap="round"/>
 <line x1="96" y1="876" x2="164" y2="914" stroke="#ff1a1a" stroke-width="6" stroke-linecap="round"/>
 <path d="M95,766 h20 l-20,20 h20" fill="none" stroke="#1e7cff" stroke-width="1.8"/>
 <path d="M180,816 l10,12 l10,-12 M190,828 v10" fill="none" stroke="#22cc00" stroke-width="1.8"/>
 <path d="M170,904 l20,20 M190,904 l-20,20" fill="none" stroke="#ff1a1a" stroke-width="1.8"/>
</g>
</svg>
<div class="a" style="left:49px;top:963px;width:1845px;height:21px;background:#404040;"></div>
<div class="a" style="left:49px;top:963px;width:1845px;height:2px;background:#e8e8e8;"></div>
<div class="a" style="left:49px;top:983px;width:1845px;height:2px;background:#ececec;"></div>
<div class="a" style="left:49px;top:963px;width:2px;height:21px;background:#d0d0d0;"></div>
<svg class="a" style="left:0px;top:0px;" width="300" height="1000" viewBox="0 0 300 1000"><path d="M55,970 v7.5" stroke="#ddd" stroke-width="1.2"/><path d="M61.5,970 l-5.5,3.75 l5.5,3.75 z" fill="#ddd"/><path d="M77,970 l-5,3.75 l5,3.75 z" fill="#ddd"/><path d="M88,970 l5,3.75 l-5,3.75 z" fill="#ddd"/><path d="M103,970 l5.5,3.75 l-5.5,3.75 z" fill="#ddd"/><path d="M109.5,970 v7.5" stroke="#ddd" stroke-width="1.2"/><path d="M119,964.5 L127,980 H168 L175.7,964.5 z" fill="#2b2b2b"/><path d="M175.7,964.5 L173,971 L177,980 H223 L231,964.5 M231,964.5 L229,971 L231,980 H250 L258,964.5" stroke="#777" stroke-width="1" fill="none"/></svg>
<div class="t" style="left:128.0px;top:965.7px;font-size:11.5px;color:#f2f2f2;font-weight:700;font-family:'Liberation Sans',sans-serif;transform:scaleX(1.0160);transform-origin:0 0;">Modell</div>
<div class="t" style="left:179.0px;top:965.7px;font-size:11.5px;color:#dcdcdc;font-weight:400;font-family:'Liberation Sans',sans-serif;transform:scaleX(0.9530);transform-origin:0 0;">Layout1</div>
<div class="t" style="left:237.0px;top:965.5px;font-size:12px;color:#cccccc;font-weight:400;font-family:'Liberation Sans',sans-serif;">+</div>
<div class="a" style="left:22px;top:985px;width:1898px;height:7px;background:#404040;"></div>
<div class="a" style="left:22px;top:987px;width:1898px;height:1px;background:#2e2e2e;"></div>
<div class="a" style="left:0px;top:1045px;width:22px;height:7px;background:#404040;"></div>
<div class="a" style="left:41px;top:991px;width:1879px;height:61px;background:#9a9a9a;"></div>
<div class="a" style="left:42px;top:993px;width:1878px;height:58px;background:#494949;"></div>
<div class="a" style="left:42px;top:1031px;width:1878px;height:1px;background:#6a6a6a;"></div>
<div class="a" style="left:41px;top:1050px;width:1879px;height:2px;background:#e8e8e8;"></div>
<svg class="a" style="left:0px;top:0px;" width="60" height="1060" viewBox="0 0 60 1060"><path d="M28,999 l7,7 M35,999 l-7,7" stroke="#888" stroke-width="1.2"/><path d="M29,1017 h6 M30,1017 v6 h4 v-6 M32,1023 v3" stroke="#888" fill="none"/></svg>
<div class="t" style="left:45.0px;top:995.9px;font-size:13px;color:#e8e8e8;font-weight:400;font-family:'Liberation Mono',monospace;transform:scaleX(0.8866);transform-origin:0 0;">Befehl:_open</div>
<div class="t" style="left:45.0px;top:1013.9px;font-size:13px;color:#e8e8e8;font-weight:400;font-family:'Liberation Mono',monospace;transform:scaleX(0.8789);transform-origin:0 0;">Befehl:</div>
<div class="t" style="left:45.0px;top:1033.9px;font-size:13px;color:#e8e8e8;font-weight:400;font-family:'Liberation Mono',monospace;transform:scaleX(0.8789);transform-origin:0 0;">Befehl:</div>
<div class="a" style="left:0px;top:1052px;width:1920px;height:24px;background:#494949;"></div>
<div class="t" style="left:4.0px;top:1057.5px;font-size:12px;color:#d8d8d8;font-weight:400;font-family:'Liberation Sans',sans-serif;transform:scaleX(0.8922);transform-origin:0 0;">105.8696, 27.0714, 0.0000</div>
<svg class="a" style="left:0px;top:0px;" width="1920" height="1080" viewBox="0 0 1920 1080"><rect x="260" y="1054" width="22" height="20" fill="#333333"/><rect x="326" y="1054" width="110" height="20" fill="#333333"/><rect x="524" y="1054" width="22" height="20" fill="#333333"/><rect x="637" y="1054" width="21" height="20" fill="#333333"/><rect x="680" y="1054" width="22" height="20" fill="#333333"/><g stroke="#ddd" stroke-width="1.3" fill="none"><path d="M264,1058 h14 M264,1062 h14 M264,1066 h14 M264,1070 h14 M266,1056 v15 M270,1056 v15 M274,1056 v15"/><path d="M287,1060 h14 M287,1067 h14 M291,1056 v15 M297,1056 v15"/><path d="M310,1056 v14 h12 M313,1064 h4 v6"/><path d="M344,1064 a6,6 0 1 1 -2,-5 M337,1064 l5,-4"/><rect x="353" y="1057" width="12" height="12"/><path d="M375,1070 h12 M375,1070 l11,-12"/><path d="M397,1064 h12 M403,1058 v12"/><path d="M418,1058 v8 h5 M421,1062 h10 M421,1066 h10 M421,1070 h10"/><path d="M440,1059 h14 M440,1064 h14 M440,1069 h14"/><path d="M464,1058 l8,8 h-5 l3,5"/><path d="M484,1062 l7,-4 l7,4 l-7,4 z M484,1066 l7,4 l7,-4"/><circle cx="512" cy="1063" r="5"/><path d="M516,1067 l4,4"/><path d="M552,1070 l5,-12 l5,12 M554,1066 h6"/><path d="M598,1070 l5,-12 l5,12"/><path d="M620,1070 l5,-12 l5,12"/><rect x="642" y="1058" width="11" height="11"/><path d="M642,1063 h11 M647,1058 v11"/><rect x="665" y="1057" width="9" height="13"/><path d="M667,1061 h5 M667,1064 h5 M667,1067 h5"/><path d="M697,1064 a6,6 0 1 1 -2,-5 M688,1064 h6 M691,1061 v6"/></g><path d="M528,1060 h10 v7 h-10 z" fill="#3d8ef0"/><path d="M532,1057 h10 v7" stroke="#3d8ef0" fill="none" stroke-width="1.5"/><rect x="276" y="1068" width="3" height="3" fill="#3d8ef0"/><circle cx="1766" cy="1064" r="5" fill="none" stroke="#ccc" stroke-width="2.5"/><rect x="1782" y="1063" width="8" height="7" fill="#3d8ef0"/><path d="M1788,1063 v-3 q0,-3 3,-3 q3,0 3,3" stroke="#3d8ef0" stroke-width="1.5" fill="none"/><circle cx="1809" cy="1062" r="4" fill="#f0b030"/><rect x="1807" y="1065" width="4" height="4" fill="#f0b030"/><rect x="1825" y="1058" width="8" height="7" fill="#3d8ef0"/><circle cx="1834" cy="1066" r="4" fill="none" stroke="#ccc" stroke-width="1.3"/><path d="M1848,1057 h11 v13 h-11 z M1850,1068 l4,-4" stroke="#ccc" stroke-width="1.3" fill="none"/></svg>
<div class="t" style="left:575.0px;top:1057.5px;font-size:12px;color:#dddddd;font-weight:400;font-family:'Liberation Sans',sans-serif;">1:1</div>
<div class="t" style="left:1868.0px;top:1057.7px;font-size:11.5px;color:#dddddd;font-weight:400;font-family:'Liberation Sans',sans-serif;transform:scaleX(0.9161);transform-origin:0 0;">GstarCAD</div>
<div class="a" style="left:0;top:1075px;width:1920px;height:5px;background:linear-gradient(90deg,#0c1424 0,#0c1424 405px,#1a44c0 420px,#1c50e0 620px,#1240c0 800px,#0e2a90 980px,#0b1a50 1040px,#0c1424 1100px,#0c1424 100%)"></div>
<div class="a" style="left:0px;top:1075px;width:1920px;height:1px;background:#202838;"></div>
<div class="a" style="left:789px;top:240px;width:1122px;height:805px;background:#f0f0f0;box-shadow:0 0 7px 1px rgba(10,40,110,0.28);"></div>
<div class="a" style="left:789px;top:240px;width:1122px;height:805px;background:transparent;border:1px solid #1d5fc8;"></div>
<div class="a" style="left:789px;top:240px;width:1122px;height:37px;background:#2b579a;"></div>
<svg class="a" style="left:0px;top:0px;" width="1920" height="280" viewBox="0 0 1920 280"><path d="M810,252 h7 l5,5 v10 h-12 z" fill="none" stroke="#ffffff" stroke-width="1.5"/><path d="M830,258 l3,3 l3,-3" stroke="#ffffff" fill="none" stroke-width="1.2"/><path d="M849,255 h6 l2,2 h8 v10 h-16 z" fill="none" stroke="#ffffff" stroke-width="1.5"/><path d="M849,260 h16" stroke="#ffffff" stroke-width="1.5"/><path d="M858,265 h6 l-2,-2" stroke="#ffffff" stroke-width="1.2" fill="none"/><path d="M879,252 h13 l3,3 v12 h-16 z" fill="none" stroke="#ffffff" stroke-width="1.6"/><rect x="882" y="252" width="9" height="5" fill="#ffffff"/><rect x="882" y="261" width="10" height="6" fill="none" stroke="#ffffff" stroke-width="1.3"/><rect x="909" y="258" width="16" height="7" rx="2" fill="none" stroke="#ffffff" stroke-width="1.5"/><rect x="912" y="253" width="10" height="5" fill="none" stroke="#ffffff" stroke-width="1.3"/><path d="M916,264 l3,3 l5,-5" stroke="#ffffff" stroke-width="1.5" fill="none"/><rect x="935" y="249" width="1.2" height="22" fill="#c8d4e8"/><path d="M961,254.5 Q952,254 948.5,261" stroke="#9db2d4" stroke-width="4.5" fill="none"/><polygon points="944.8,255.5 944.8,267 954,263.5" fill="#9db2d4"/><path d="M968,258 l3,3 l3,-3" stroke="#e0e0d8" fill="none" stroke-width="1"/><path d="M986,254.5 Q995,254 998.5,261" stroke="#9db2d4" stroke-width="4.5" fill="none"/><polygon points="1002.2,255.5 1002.2,267 993,263.5" fill="#9db2d4"/><path d="M1009,258 l3,3 l3,-3" stroke="#e0e0d8" fill="none" stroke-width="1"/><rect x="1023" y="249" width="1.2" height="22" fill="#c8d4e8"/><rect x="1033" y="251" width="15" height="15" rx="1.5" fill="none" stroke="#ffffff" stroke-width="1.5"/><text x="1040.5" y="263" font-size="12" font-weight="700" text-anchor="middle" fill="#ffffff" font-family="Liberation Sans">?</text><path d="M1053,258 l3,3 l3,-3" stroke="#ffffff" fill="none" stroke-width="1.2"/><rect x="1067" y="256.5" width="6.5" height="1.6" fill="#fff"/><path d="M1067,259.5 h6.5 l-3.25,3.5 z" fill="#fff"/><circle cx="1656" cy="260.5" r="10" fill="#1a7df0"/><path d="M1752,258 l3,3 l3,-3" stroke="#ffffff" fill="none" stroke-width="1.3"/><rect x="1774" y="254" width="13" height="11" fill="none" stroke="#ffffff" stroke-width="1.3"/><path d="M1774,257 h13 M1780.5,263 v-5 M1778,260 l2.5,-2.5 l2.5,2.5" stroke="#ffffff" stroke-width="1.2" fill="none"/><rect x="1813" y="262" width="8" height="2" fill="#ffffff"/><rect x="1850" y="256" width="9" height="9" fill="none" stroke="#ffffff" stroke-width="1.4"/><path d="M1886,256 l8,8 M1894,256 l-8,8" stroke="#ffffff" stroke-width="1.6"/></svg>
<div class="t" style="left:1281.0px;top:253.7px;font-size:11.5px;color:#ffffff;font-weight:400;font-family:'Liberation Sans',sans-serif;">MindManager - Service request</div>
<div class="t" style="left:1649.0px;top:255.3px;font-size:9.5px;color:#ffffff;font-weight:400;font-family:'Liberation Sans',sans-serif;transform:scaleX(0.8845);transform-origin:0 0;">WD</div>
<div class="t" style="left:1672.0px;top:253.7px;font-size:11.5px;color:#ffffff;font-weight:400;font-family:'Liberation Sans',sans-serif;transform:scaleX(1.0145);transform-origin:0 0;">Werner Dolata</div>
<div class="t" style="left:805.0px;top:287.7px;font-size:11.5px;color:#333333;font-weight:400;font-family:'Liberation Sans',sans-serif;transform:scaleX(1.0430);transform-origin:0 0;">Datei</div>
<div class="t" style="left:861.0px;top:287.7px;font-size:11.5px;color:#333333;font-weight:400;font-family:'Liberation Sans',sans-serif;transform:scaleX(1.0294);transform-origin:0 0;">Start</div>
<div class="t" style="left:915.0px;top:287.7px;font-size:11.5px;color:#333333;font-weight:400;font-family:'Liberation Sans',sans-serif;transform:scaleX(1.0133);transform-origin:0 0;">Einfügen</div>
<div class="t" style="left:992.0px;top:287.7px;font-size:11.5px;color:#333333;font-weight:400;font-family:'Liberation Sans',sans-serif;transform:scaleX(1.0270);transform-origin:0 0;">Aufgabe</div>
<div class="t" style="left:1066.0px;top:287.7px;font-size:11.5px;color:#333333;font-weight:400;font-family:'Liberation Sans',sans-serif;transform:scaleX(1.0260);transform-origin:0 0;">Entwurf</div>
<div class="t" style="left:1137.0px;top:287.7px;font-size:11.5px;color:#333333;font-weight:400;font-family:'Liberation Sans',sans-serif;">Formatieren</div>
<div class="t" style="left:1229.0px;top:287.7px;font-size:11.5px;color:#333333;font-weight:400;font-family:'Liberation Sans',sans-serif;transform:scaleX(1.0139);transform-origin:0 0;">Erweitert</div>
<div class="t" style="left:1305.0px;top:287.7px;font-size:11.5px;color:#333333;font-weight:400;font-family:'Liberation Sans',sans-serif;transform:scaleX(1.0255);transform-origin:0 0;">Überprüfen</div>
<div class="t" style="left:1394.0px;top:287.7px;font-size:11.5px;color:#333333;font-weight:400;font-family:'Liberation Sans',sans-serif;transform:scaleX(1.0077);transform-origin:0 0;">Ansicht</div>
<div class="t" style="left:1460.0px;top:287.7px;font-size:11.5px;color:#333333;font-weight:400;font-family:'Liberation Sans',sans-serif;transform:scaleX(1.0433);transform-origin:0 0;">Hilfe</div>
<svg class="a" style="left:0px;top:0px;" width="1920" height="310" viewBox="0 0 1920 310"><rect x="1725.5" y="282.5" width="123" height="18" fill="#fff" stroke="#c8c8c8"/><path d="M1838,291 h6 l-3,3 z" fill="#666"/><g fill="none" stroke="#333" stroke-width="1.4"><rect x="1853" y="285" width="5" height="4"/><rect x="1861" y="285" width="5" height="4"/><rect x="1852" y="289" width="7" height="10"/><rect x="1860" y="289" width="7" height="10"/><path d="M1859,293 h1"/></g><path d="M1871,292 l2.5,2.5 l2.5,-2.5" stroke="#333" fill="none" stroke-width="1.2"/><rect x="1882" y="287" width="1" height="12" fill="#ddd"/><rect x="1887.5" y="284.5" width="15" height="15" rx="1.5" fill="none" stroke="#333" stroke-width="1.5"/><text x="1895" y="297" font-size="13" font-weight="700" text-anchor="middle" fill="#1c5bb8" font-family="Liberation Sans">?</text></svg>
<div class="a" style="left:792px;top:308px;width:1087px;height:688px;background:#a8a8a8;"></div>
<div class="a" style="left:793px;top:309px;width:1085px;height:687px;background:#eeeeee;"></div>
<div class="a" style="left:794px;top:310px;width:1081px;height:686px;background:#f0f0f0;"></div>
<div class="a" style="left:794px;top:310px;width:1081px;height:2px;background:#6a6a6a;"></div>
<div class="a" style="left:794px;top:310px;width:2px;height:669px;background:#6a6a6a;"></div>
<div class="a" style="left:796px;top:312px;width:1062px;height:667px;background:#ffffff;"></div>
<div class="a" style="left:1876px;top:308px;width:2px;height:713px;background:#a0a0a0;"></div>
<div class="a" style="left:1865px;top:568px;width:2px;height:145px;background:#808080;"></div>
<div class="a" style="left:1181px;top:986px;width:291px;height:2px;background:#808080;"></div>
<svg class="a" style="left:0px;top:0px;" width="1920" height="1000" viewBox="0 0 1920 1000"><rect x="1207.5" y="408.5" width="221" height="26" rx="4" fill="#fff" stroke="#444" stroke-width="1.2"/><text x="1316.7" y="426.4" font-size="13.5" font-weight="700" fill="#1f4a94" text-anchor="middle" font-family="Liberation Sans" textLength="205.0" lengthAdjust="spacingAndGlyphs">Process flow for a service request</text><rect x="806.5" y="452.5" width="1043" height="353.5" fill="#fef5ef" stroke="#6e6e6e" stroke-width="1.4"/><path d="M882.5,452.5 V806 M806.5,540.5 H1849.5 M806.5,629 H1849.5 M806.5,717.7 H1849.5" stroke="#6e6e6e" stroke-width="1.4"/><rect x="819.0" y="470.5" width="52.0" height="59.5" rx="4" fill="#333333"/><text x="845.0" y="494.1" font-size="8.5" font-weight="700" fill="#fff" text-anchor="middle" font-family="Liberation Sans" textLength="35.6" lengthAdjust="spacingAndGlyphs">Customer</text><g fill="#80cdd0"><circle cx="836.5" cy="505" r="3"/><rect x="832.5" y="509" width="8" height="10" rx="2"/><rect x="834" y="517" width="5" height="7"/><circle cx="853.5" cy="505" r="3"/><rect x="849.5" y="509" width="8" height="10" rx="2"/><rect x="851" y="517" width="5" height="7"/></g><g fill="#346c82"><circle cx="845" cy="502.5" r="3.5"/><rect x="840" y="507" width="10" height="12" rx="2"/><rect x="842" y="517" width="6" height="9"/></g><rect x="823.5" y="562.5" width="43.5" height="49.0" rx="4" fill="#333333"/><text x="845.2" y="575.1" font-size="8.5" font-weight="700" fill="#fff" text-anchor="middle" font-family="Liberation Sans" textLength="18.7" lengthAdjust="spacingAndGlyphs">Sales</text><g fill="#80cdd0"><circle cx="837" cy="583" r="2.6"/><path d="M832,590 q0,-4 5,-4 q5,0 5,4 z"/><circle cx="853" cy="583" r="2.6"/><path d="M848,590 q0,-4 5,-4 q5,0 5,4 z"/><circle cx="845" cy="591.5" r="2.6"/><path d="M840,598 q0,-4 5,-4 q5,0 5,4 z"/></g><g fill="#3a6f80"><circle cx="837" cy="598" r="2.6"/><path d="M832,605 q0,-4 5,-4 q5,0 5,4 z"/><circle cx="853" cy="598" r="2.6"/><path d="M848,605 q0,-4 5,-4 q5,0 5,4 z"/></g><rect x="822.0" y="653.0" width="46.0" height="49.0" rx="4" fill="#333333"/><text x="845.0" y="665.6" font-size="8.5" font-weight="700" fill="#fff" text-anchor="middle" font-family="Liberation Sans" textLength="29.4" lengthAdjust="spacingAndGlyphs">PS Orga</text><rect x="833" y="673" width="24" height="23" fill="#e4e4e4"/><rect x="833" y="673" width="24" height="5" fill="#e8574a"/><path d="M838,671 v4 M852,671 v4" stroke="#555" stroke-width="1.2"/><path d="M839,686 l4,4 l7,-7" stroke="#48b050" stroke-width="1.5" fill="none"/><rect x="824.0" y="739.0" width="42.7" height="50.0" rx="4" fill="#333333"/><text x="845.4" y="752.4" font-size="8.5" font-weight="700" fill="#fff" text-anchor="middle" font-family="Liberation Sans" textLength="22.0" lengthAdjust="spacingAndGlyphs">PS Clt</text><path d="M838,760 l-6,5 l2,6 l3,-1 v11 h16 v-11 l3,1 l2,-6 l-6,-5 q-2,3 -7,3 q-5,0 -7,-3 z" fill="#e8574a"/><text x="845.5" y="776.2" font-size="9.0" font-weight="400" fill="#fff" text-anchor="middle" font-family="Liberation Sans">8</text><rect x="822.0" y="823.0" width="46.0" height="49.0" rx="4" fill="#333333"/><text x="845.0" y="836.0" font-size="8.5" font-weight="700" fill="#fff" text-anchor="middle" font-family="Liberation Sans" textLength="27.0" lengthAdjust="spacingAndGlyphs">Mngmt</text><ellipse cx="845" cy="864" rx="11" ry="4" fill="#7cc0e0"/><circle cx="845" cy="848" r="3.5" fill="#3f7f90"/><rect x="840.5" y="852" width="9" height="9" rx="2" fill="#3f7f90"/><rect x="843" y="858" width="4" height="7" fill="#3f7f90"/><polyline points="923.0,512.0 923.0,559.5 928.0,559.5" fill="none" stroke="#8c0000" stroke-width="1.3"/><polyline points="987.0,516.0 987.0,559.5 928.0,559.5 928.0,563.0" fill="none" stroke="#8a8a8a" stroke-width="1.2"/><polygon points="928.0,568.0 925.5,562.4 930.5,562.4" fill="#8a8a8a"/><polyline points="956.6,583.7 995.0,583.7" fill="none" stroke="#8c0000" stroke-width="1.4"/><polygon points="1000.8,583.7 994.4,580.9 994.4,586.5" fill="#8c0000"/><polyline points="1029.0,599.5 1029.0,674.0 1080.0,674.0" fill="none" stroke="#8c0000" stroke-width="1.4"/><polygon points="1086.0,674.0 1079.6,671.2 1079.6,676.8" fill="#8c0000"/><polyline points="1145.7,674.0 1165.0,674.0" fill="none" stroke="#f01010" stroke-width="1.4"/><polyline points="1165.0,674.0 1173.0,674.0" fill="none" stroke="#8c0000" stroke-width="1.4"/><polygon points="1179.0,674.0 1172.6,671.2 1172.6,676.8" fill="#8c0000"/><polyline points="1291.5,674.0 1300.0,674.0 1300.0,764.4 1313.0,764.4" fill="none" stroke="#8c0000" stroke-width="1.4"/><polygon points="1319.0,764.4 1312.6,761.6 1312.6,767.2" fill="#8c0000"/><polyline points="1389.5,764.0 1409.0,764.0" fill="none" stroke="#8c0000" stroke-width="1.4"/><polygon points="1415.0,764.0 1408.6,761.2 1408.6,766.8" fill="#8c0000"/><polyline points="1488.3,764.0 1507.0,764.0" fill="none" stroke="#8c0000" stroke-width="1.4"/><polygon points="1513.6,764.0 1507.2,761.2 1507.2,766.8" fill="#8c0000"/><polyline points="1592.0,764.0 1613.0,764.0" fill="none" stroke="#8c0000" stroke-width="1.4"/><polygon points="1619.6,764.0 1613.2,761.2 1613.2,766.8" fill="#8c0000"/><polyline points="1653.7,749.0 1653.7,601.0" fill="none" stroke="#8c0000" stroke-width="1.4"/><polygon points="1653.7,595.0 1650.9,601.4 1656.5,601.4" fill="#8c0000"/><path d="M1683.5,584 H1703 q3,-5 6,0 H1775" fill="none" stroke="#8c0000" stroke-width="1.4"/><polygon points="1781.0,584.0 1774.6,581.2 1774.6,586.8" fill="#8c0000"/><polyline points="1116.0,700.0 1116.0,831.0" fill="none" stroke="#f01010" stroke-width="1.3"/><polygon points="1116.0,837.0 1113.2,830.6 1118.8,830.6" fill="#f01010"/><polyline points="1165.0,674.0 1165.0,847.6 1200.0,847.6" fill="none" stroke="#f01010" stroke-width="1.3"/><polygon points="1206.0,847.6 1199.6,844.8 1199.6,850.4" fill="#f01010"/><polyline points="1235.0,832.0 1235.0,701.0" fill="none" stroke="#f01010" stroke-width="1.3"/><polygon points="1235.0,695.0 1232.2,701.4 1237.8,701.4" fill="#f01010"/><polyline points="1235.0,872.0 1235.0,882.4 1116.0,882.4 1116.0,863.0" fill="none" stroke="#f01010" stroke-width="1.3"/><polygon points="1116.0,857.5 1113.2,863.9 1118.8,863.9" fill="#f01010"/><polyline points="1091.0,699.6 1018.7,699.6 1018.7,821.0" fill="none" stroke="#8a8a8a" stroke-width="1.2"/><polygon points="1018.7,827.0 1015.9,820.6 1021.5,820.6" fill="#8a8a8a"/><polyline points="1653.7,574.0 1653.7,525.0" fill="none" stroke="#8a8a8a" stroke-width="1.3"/><polygon points="1653.7,519.5 1650.9,525.9 1656.5,525.9" fill="#8a8a8a"/><polyline points="1688.0,764.4 1728.0,764.4" fill="none" stroke="#8a8a8a" stroke-width="1.2"/><polygon points="1734.5,764.4 1728.1,761.6 1728.1,767.2" fill="#8a8a8a"/><polyline points="1706.6,764.4 1706.6,698.0" fill="none" stroke="#8a8a8a" stroke-width="1.2"/><polygon points="1706.6,692.5 1703.8,698.9 1709.4,698.9" fill="#8a8a8a"/><polyline points="1706.6,663.0 1706.6,501.0 1688.0,501.0" fill="none" stroke="#8a8a8a" stroke-width="1.2"/><polygon points="1682.5,501.0 1688.9,498.2 1688.9,503.8" fill="#8a8a8a"/><polyline points="1780.0,754.0 1780.0,605.0 1802.0,605.0 1802.0,600.0" fill="none" stroke="#8a8a8a" stroke-width="1.2"/><polygon points="1802.0,594.0 1799.2,600.4 1804.8,600.4" fill="#8a8a8a"/><polyline points="1155.5,497.0 1204.0,497.0" fill="none" stroke="#666" stroke-width="1.6"/><polyline points="1144.0,583.7 1200.4,583.7" fill="none" stroke="#666" stroke-width="1.6"/><polyline points="1116.0,517.4 1116.0,563.4" fill="none" stroke="#9fcbff" stroke-width="1.6"/><polygon points="1116.0,512.9 1113.3,519.0 1118.7,519.0" fill="#9fcbff"/><polygon points="1116.0,567.9 1113.3,561.8 1118.7,561.8" fill="#9fcbff"/><polyline points="1235.0,517.0 1235.0,558.3" fill="none" stroke="#9fcbff" stroke-width="1.6"/><polygon points="1235.0,512.5 1232.3,518.6 1237.7,518.6" fill="#9fcbff"/><polygon points="1235.0,562.8 1232.3,556.7 1237.7,556.7" fill="#9fcbff"/><polyline points="1354.0,517.0 1354.0,563.4" fill="none" stroke="#9fcbff" stroke-width="1.6"/><polygon points="1354.0,512.5 1351.3,518.6 1356.7,518.6" fill="#9fcbff"/><polygon points="1354.0,567.9 1351.3,561.8 1356.7,561.8" fill="#9fcbff"/><polyline points="1116.0,604.3 1116.0,654.0" fill="none" stroke="#9fcbff" stroke-width="1.6"/><polygon points="1116.0,599.8 1113.3,605.9 1118.7,605.9" fill="#9fcbff"/><polygon points="1116.0,658.5 1113.3,652.4 1118.7,652.4" fill="#9fcbff"/><polyline points="1235.0,609.4 1235.0,648.0" fill="none" stroke="#9fcbff" stroke-width="1.6"/><polygon points="1235.0,604.9 1232.3,611.0 1237.7,611.0" fill="#9fcbff"/><polygon points="1235.0,652.5 1232.3,646.4 1237.7,646.4" fill="#9fcbff"/><polyline points="1354.0,604.3 1354.0,744.0" fill="none" stroke="#9fcbff" stroke-width="1.6"/><polygon points="1354.0,599.8 1351.3,605.9 1356.7,605.9" fill="#9fcbff"/><polygon points="1354.0,748.5 1351.3,742.4 1356.7,742.4" fill="#9fcbff"/><polyline points="1451.8,647.0 1451.8,583.7 1401.0,583.7" fill="none" stroke="#9fcbff" stroke-width="1.6"/><polygon points="1395.6,583.7 1401.7,581.0 1401.7,586.4" fill="#9fcbff"/><polygon points="1451.8,653.0 1449.1,646.9 1454.4,646.9" fill="#9fcbff"/><polyline points="1615.0,640.0 1615.0,583.7 1618.0,583.7" fill="none" stroke="#9fcbff" stroke-width="1.6"/><polygon points="1624.0,583.7 1617.9,581.0 1617.9,586.4" fill="#9fcbff"/><polyline points="1615.0,630.0 1615.0,738.0 1653.7,738.0 1653.7,743.0" fill="none" stroke="#9fcbff" stroke-width="1.6"/><polygon points="1653.7,749.0 1651.0,742.9 1656.4,742.9" fill="#9fcbff"/><polyline points="1291.5,674.0 1409.0,674.0" fill="none" stroke="#999" stroke-width="1.0" stroke-dasharray="1.5,1.5"/><polygon points="1415.3,674.0 1408.9,671.2 1408.9,676.8" fill="#8a8a8a"/><polyline points="1488.3,674.0 1552.5,674.0 1552.5,748.0" fill="none" stroke="#999" stroke-width="1.0" stroke-dasharray="1.5,1.5"/><polygon points="1552.5,754.0 1549.7,747.6 1555.3,747.6" fill="#8a8a8a"/><polyline points="1538.0,609.0 1538.0,618.8 1552.5,618.8 1552.5,674.0" fill="none" stroke="#999" stroke-width="1.0" stroke-dasharray="1.5,1.5"/><polyline points="1453.0,651.0 1494.0,592.0" fill="none" stroke="#999" stroke-width="1.0" stroke-dasharray="1.5,1.5"/><polygon points="1497.5,587 1489,591 1495,596" fill="#8a8a8a"/><rect x="889.4" y="482.0" width="67.2" height="30.0" rx="15.0" fill="#2f63f2" stroke="#1a2a60" stroke-width="1"/><text x="922.7" y="494.5" font-size="8.5" font-weight="700" fill="#fff" text-anchor="middle" font-family="Liberation Sans" textLength="26.4" lengthAdjust="spacingAndGlyphs">Service</text><text x="923.0" y="505.1" font-size="8.5" font-weight="700" fill="#fff" text-anchor="middle" font-family="Liberation Sans" textLength="30.0" lengthAdjust="spacingAndGlyphs">Request</text><path d="M963.0,478.0 H1010.0 V512.0 Q998.2,506.0 986.5,512.0 T963.0,514.0 Z" fill="#f6f6f6" stroke="#555" stroke-width="1"/><text x="985.4" y="491.7" font-size="8.5" font-weight="400" fill="#555" text-anchor="middle" font-family="Liberation Sans" textLength="26.6" lengthAdjust="spacingAndGlyphs">Service-</text><text x="986.0" y="501.9" font-size="8.5" font-weight="400" fill="#555" text-anchor="middle" font-family="Liberation Sans" textLength="36.0" lengthAdjust="spacingAndGlyphs">Document</text><rect x="1076.0" y="482.0" width="79.5" height="30.4" fill="#c9f8c9" stroke="#505050" stroke-width="1.3"/><path d="M1080.5,482.0 v30.4 M1151.0,482.0 v30.4" stroke="#505050" stroke-width="1.3"/><text x="1115.0" y="494.1" font-size="8.5" font-weight="400" fill="#444" text-anchor="middle" font-family="Liberation Sans" textLength="36.0" lengthAdjust="spacingAndGlyphs">Customize</text><text x="1115.3" y="505.1" font-size="8.5" font-weight="400" fill="#444" text-anchor="middle" font-family="Liberation Sans" textLength="60.4" lengthAdjust="spacingAndGlyphs">contents or dates</text><rect x="1204.0" y="482.0" width="62.7" height="30.0" fill="#c9f8c9" stroke="#505050" stroke-width="1.3"/><path d="M1208.5,482.0 v30.0 M1262.2,482.0 v30.0" stroke="#505050" stroke-width="1.3"/><text x="1234.7" y="494.1" font-size="8.5" font-weight="400" fill="#444" text-anchor="middle" font-family="Liberation Sans" textLength="16.0" lengthAdjust="spacingAndGlyphs">Date</text><text x="1234.9" y="505.1" font-size="8.5" font-weight="400" fill="#444" text-anchor="middle" font-family="Liberation Sans" textLength="43.7" lengthAdjust="spacingAndGlyphs">coordination</text><rect x="1323" y="482" width="63" height="30" fill="#ffc100" stroke="#555" stroke-width="1.3"/><text x="1354.0" y="494.1" font-size="8.5" font-weight="400" fill="#555" text-anchor="middle" font-family="Liberation Sans" textLength="50.0" lengthAdjust="spacingAndGlyphs">Provides more</text><text x="1354.0" y="505.1" font-size="8.5" font-weight="400" fill="#555" text-anchor="middle" font-family="Liberation Sans" textLength="22.0" lengthAdjust="spacingAndGlyphs">details</text><path d="M1625.5,482.0 H1682.5 V516.0 Q1668.2,510.0 1654.0,516.0 T1625.5,518.0 Z" fill="#cdf9fb" stroke="#444" stroke-width="1"/><text x="1653.3" y="495.1" font-size="8.5" font-weight="400" fill="#444" text-anchor="middle" font-family="Liberation Sans" textLength="43.8" lengthAdjust="spacingAndGlyphs">Ev Info's and</text><text x="1653.4" y="505.1" font-size="8.5" font-weight="400" fill="#444" text-anchor="middle" font-family="Liberation Sans" textLength="31.5" lengthAdjust="spacingAndGlyphs">Materials</text><rect x="900" y="568" width="56.6" height="31.5" fill="#c0c0c0" stroke="#555" stroke-width="1.3"/><text x="927.9" y="581.1" font-size="8.5" font-weight="700" fill="#333" text-anchor="middle" font-family="Liberation Sans" textLength="23.6" lengthAdjust="spacingAndGlyphs">Create</text><text x="928.0" y="591.5" font-size="8.5" font-weight="700" fill="#333" text-anchor="middle" font-family="Liberation Sans" textLength="46.3" lengthAdjust="spacingAndGlyphs">request map</text><rect x="1000.8" y="568" width="56.9" height="31.5" fill="#c0c0c0" stroke="#555" stroke-width="1.3"/><text x="1029.0" y="581.1" font-size="8.5" font-weight="700" fill="#333" text-anchor="middle" font-family="Liberation Sans" textLength="42.0" lengthAdjust="spacingAndGlyphs">Request via</text><text x="1029.8" y="591.5" font-size="8.5" font-weight="700" fill="#333" text-anchor="middle" font-family="Liberation Sans" textLength="42.6" lengthAdjust="spacingAndGlyphs">PS P.O. Box</text><rect x="1087.8" y="568.4" width="56.2" height="30.9" fill="#c9f8c9" stroke="#505050" stroke-width="1.3"/><path d="M1092.3,568.4 v30.9 M1139.5,568.4 v30.9" stroke="#505050" stroke-width="1.3"/><text x="1115.3" y="580.9" font-size="8.5" font-weight="400" fill="#333" text-anchor="middle" font-family="Liberation Sans" textLength="33.8" lengthAdjust="spacingAndGlyphs">Feasibility</text><text x="1115.3" y="591.5" font-size="8.5" font-weight="400" fill="#333" text-anchor="middle" font-family="Liberation Sans" textLength="37.3" lengthAdjust="spacingAndGlyphs">coordinate</text><rect x="1200.4" y="563.3" width="69.4" height="41.1" fill="#fbfbfb" stroke="#cfcfcf" stroke-width="1.3"/><path d="M1204.9,563.3 v41.1 M1265.3,563.3 v41.1" stroke="#cfcfcf" stroke-width="1.3"/><text x="1234.2" y="576.0" font-size="8.5" font-weight="400" fill="#b0b0b0" text-anchor="middle" font-family="Liberation Sans" textLength="47.8" lengthAdjust="spacingAndGlyphs">Ev involved in</text><text x="1234.8" y="586.4" font-size="8.5" font-weight="400" fill="#b0b0b0" text-anchor="middle" font-family="Liberation Sans" textLength="46.0" lengthAdjust="spacingAndGlyphs">Appointment</text><text x="1234.5" y="596.9" font-size="8.5" font-weight="400" fill="#b0b0b0" text-anchor="middle" font-family="Liberation Sans" textLength="43.7" lengthAdjust="spacingAndGlyphs">coordination</text><rect x="1312.7" y="568.4" width="82.9" height="30.9" fill="#fbfbfb" stroke="#cfcfcf" stroke-width="1.3"/><path d="M1317.2,568.4 v30.9 M1391.1,568.4 v30.9" stroke="#cfcfcf" stroke-width="1.3"/><text x="1353.5" y="580.9" font-size="8.5" font-weight="400" fill="#b0b0b0" text-anchor="middle" font-family="Liberation Sans" textLength="50.7" lengthAdjust="spacingAndGlyphs">Ev involviert in</text><text x="1353.5" y="591.5" font-size="8.5" font-weight="400" fill="#b0b0b0" text-anchor="middle" font-family="Liberation Sans" textLength="65.0" lengthAdjust="spacingAndGlyphs">Detailkoordination</text><rect x="1498.0" y="569.5" width="79.5" height="30.0" fill="#f5f5f5" stroke="#444" stroke-width="1.3"/><path d="M1502.5,569.5 v30.0 M1573.0,569.5 v30.0" stroke="#444" stroke-width="1.3"/><text x="1537.5" y="582.1" font-size="8.5" font-weight="400" fill="#555" text-anchor="middle" font-family="Liberation Sans" textLength="57.0" lengthAdjust="spacingAndGlyphs">Ev info materials</text><text x="1537.5" y="592.8" font-size="8.5" font-weight="400" fill="#555" text-anchor="middle" font-family="Liberation Sans" textLength="30.0" lengthAdjust="spacingAndGlyphs">organize</text><rect x="1504.0" y="598.5" width="62.0" height="10.5" fill="#fff" stroke="#222" stroke-width="1.3"/><circle cx="1510.0" cy="602.2" r="1.7" fill="none" stroke="#666" stroke-width="0.7"/><path d="M1507.0,607.2 q0,-3 3,-3 q3,0 3,3 z" fill="none" stroke="#666" stroke-width="0.7"/><text x="1539.0" y="605.7" font-size="5.5" font-weight="400" fill="#444" text-anchor="middle" font-family="Liberation Sans" textLength="46.0" lengthAdjust="spacingAndGlyphs">R: Accountmanager</text><path d="M1580.0,590.0 h5 l2,2 v6 h-7 z" fill="#fff" stroke="#8aa0c0" stroke-width="0.8"/><path d="M1584.0,599.0 l3,-3" stroke="#3a80d0" stroke-width="1"/><rect x="1624.0" y="574.0" width="59.5" height="20.0" fill="#08c4f4" stroke="#333" stroke-width="1.3"/><path d="M1627.5,574.0 v20.0 M1680.0,574.0 v20.0" stroke="#333" stroke-width="1.3"/><text x="1653.7" y="586.6" font-size="8.5" font-weight="700" fill="#222" text-anchor="middle" font-family="Liberation Sans" textLength="40.5" lengthAdjust="spacingAndGlyphs">Follow Ups</text><rect x="1781.0" y="574.0" width="41.5" height="20.0" rx="10.0" fill="#2f63f2" stroke="#1a2a60" stroke-width="1"/><text x="1801.0" y="586.6" font-size="8.5" font-weight="700" fill="#fff" text-anchor="middle" font-family="Liberation Sans" textLength="14.0" lengthAdjust="spacingAndGlyphs">End</text><rect x="1086.0" y="659.0" width="59.7" height="30.5" fill="#c9f8c9" stroke="#444" stroke-width="1.3"/><path d="M1090.5,659.0 v30.5 M1141.2,659.0 v30.5" stroke="#444" stroke-width="1.3"/><text x="1115.4" y="671.6" font-size="8.5" font-weight="700" fill="#222" text-anchor="middle" font-family="Liberation Sans" textLength="37.3" lengthAdjust="spacingAndGlyphs">Feasibility</text><text x="1115.2" y="681.7" font-size="8.5" font-weight="700" fill="#222" text-anchor="middle" font-family="Liberation Sans" textLength="22.0" lengthAdjust="spacingAndGlyphs">Check</text><rect x="1091.0" y="689.0" width="55.0" height="11.0" fill="#fff" stroke="#222" stroke-width="1.3"/><circle cx="1097.0" cy="693.0" r="1.7" fill="none" stroke="#666" stroke-width="0.7"/><path d="M1094.0,698.0 q0,-3 3,-3 q3,0 3,3 z" fill="none" stroke="#666" stroke-width="0.7"/><text x="1122.3" y="696.5" font-size="5.5" font-weight="400" fill="#444" text-anchor="middle" font-family="Liberation Sans" textLength="38.6" lengthAdjust="spacingAndGlyphs">R: Steven, Janine</text><path d="M1148.0,679.0 h5 l2,2 v6 h-7 z" fill="#fff" stroke="#8aa0c0" stroke-width="0.8"/><path d="M1152.0,688.0 l3,-3" stroke="#3a80d0" stroke-width="1"/><rect x="1179.0" y="653.0" width="112.5" height="41.7" fill="#c9f8c9" stroke="#444" stroke-width="1.3"/><path d="M1183.5,653.0 v41.7 M1287.0,653.0 v41.7" stroke="#444" stroke-width="1.3"/><text x="1234.5" y="666.1" font-size="8.5" font-weight="700" fill="#222" text-anchor="middle" font-family="Liberation Sans" textLength="92.0" lengthAdjust="spacingAndGlyphs">Coordinate appointment</text><text x="1234.2" y="676.8" font-size="8.5" font-weight="700" fill="#222" text-anchor="middle" font-family="Liberation Sans" textLength="83.7" lengthAdjust="spacingAndGlyphs">&amp; Assign consultant &amp;</text><text x="1234.3" y="687.1" font-size="8.5" font-weight="700" fill="#222" text-anchor="middle" font-family="Liberation Sans" textLength="41.5" lengthAdjust="spacingAndGlyphs">Set blocker</text><rect x="1184.0" y="694.0" width="38.0" height="10.5" fill="#fff" stroke="#222" stroke-width="1.3"/><circle cx="1190.0" cy="697.8" r="1.7" fill="none" stroke="#666" stroke-width="0.7"/><path d="M1187.0,702.8 q0,-3 3,-3 q3,0 3,3 z" fill="none" stroke="#666" stroke-width="0.7"/><text x="1205.8" y="701.2" font-size="5.5" font-weight="400" fill="#444" text-anchor="middle" font-family="Liberation Sans" textLength="19.7" lengthAdjust="spacingAndGlyphs">R: Janine</text><rect x="1415.3" y="653.5" width="73.0" height="40.7" fill="#f5f5f5" stroke="#444" stroke-width="1.3"/><path d="M1419.8,653.5 v40.7 M1483.8,653.5 v40.7" stroke="#444" stroke-width="1.3"/><text x="1451.0" y="666.4" font-size="8.5" font-weight="400" fill="#555" text-anchor="middle" font-family="Liberation Sans" textLength="50.8" lengthAdjust="spacingAndGlyphs">Organizational</text><text x="1451.0" y="676.8" font-size="8.5" font-weight="400" fill="#555" text-anchor="middle" font-family="Liberation Sans" textLength="41.0" lengthAdjust="spacingAndGlyphs">Information</text><text x="1451.0" y="686.9" font-size="8.5" font-weight="400" fill="#555" text-anchor="middle" font-family="Liberation Sans" textLength="26.7" lengthAdjust="spacingAndGlyphs">provide</text><rect x="1420.0" y="693.0" width="37.5" height="11.5" fill="#fff" stroke="#222" stroke-width="1.3"/><circle cx="1426.0" cy="697.2" r="1.7" fill="none" stroke="#666" stroke-width="0.7"/><path d="M1423.0,702.2 q0,-3 3,-3 q3,0 3,3 z" fill="none" stroke="#666" stroke-width="0.7"/><text x="1442.2" y="700.7" font-size="5.5" font-weight="400" fill="#444" text-anchor="middle" font-family="Liberation Sans" textLength="20.5" lengthAdjust="spacingAndGlyphs">R: Janine</text><path d="M1490.0,684.0 h5 l2,2 v6 h-7 z" fill="#fff" stroke="#8aa0c0" stroke-width="0.8"/><path d="M1494.0,693.0 l3,-3" stroke="#3a80d0" stroke-width="1"/><rect x="1678.0" y="663.3" width="57.4" height="19.7" fill="#08c4f4" stroke="#333" stroke-width="1.3"/><path d="M1681.5,663.3 v19.7 M1731.9,663.3 v19.7" stroke="#333" stroke-width="1.3"/><text x="1706.3" y="675.7" font-size="8.5" font-weight="400" fill="#333" text-anchor="middle" font-family="Liberation Sans" textLength="38.6" lengthAdjust="spacingAndGlyphs">Certificates</text><rect x="1683.0" y="682.0" width="37.5" height="10.5" fill="#fff" stroke="#222" stroke-width="1.3"/><circle cx="1689.0" cy="685.8" r="1.7" fill="none" stroke="#666" stroke-width="0.7"/><path d="M1686.0,690.8 q0,-3 3,-3 q3,0 3,3 z" fill="none" stroke="#666" stroke-width="0.7"/><text x="1705.4" y="689.2" font-size="5.5" font-weight="400" fill="#444" text-anchor="middle" font-family="Liberation Sans" textLength="20.8" lengthAdjust="spacingAndGlyphs">R: Janine</text><path d="M1738.0,673.0 h5 l2,2 v6 h-7 z" fill="#fff" stroke="#8aa0c0" stroke-width="0.8"/><path d="M1742.0,682.0 l3,-3" stroke="#3a80d0" stroke-width="1"/><rect x="1319.0" y="749.0" width="70.5" height="30.4" fill="#ffc100" stroke="#444" stroke-width="1.3"/><path d="M1323.5,749.0 v30.4 M1385.0,749.0 v30.4" stroke="#444" stroke-width="1.3"/><text x="1353.5" y="761.8" font-size="8.5" font-weight="400" fill="#444" text-anchor="middle" font-family="Liberation Sans" textLength="32.0" lengthAdjust="spacingAndGlyphs">Work out</text><text x="1353.4" y="771.9" font-size="8.5" font-weight="400" fill="#444" text-anchor="middle" font-family="Liberation Sans" textLength="51.4" lengthAdjust="spacingAndGlyphs">content details</text><path d="M1392.0,769.0 h5 l2,2 v6 h-7 z" fill="#fff" stroke="#8aa0c0" stroke-width="0.8"/><path d="M1396.0,778.0 l3,-3" stroke="#3a80d0" stroke-width="1"/><rect x="1415.3" y="744.0" width="73.0" height="40.5" fill="#fbfbfb" stroke="#cfcfcf" stroke-width="1.3"/><path d="M1419.8,744.0 v40.5 M1483.8,744.0 v40.5" stroke="#cfcfcf" stroke-width="1.3"/><text x="1451.0" y="756.7" font-size="8.5" font-weight="400" fill="#c0c0c0" text-anchor="middle" font-family="Liberation Sans" textLength="50.8" lengthAdjust="spacingAndGlyphs">Travel booking</text><text x="1451.0" y="767.1" font-size="8.5" font-weight="400" fill="#c0c0c0" text-anchor="middle" font-family="Liberation Sans">&amp;</text><text x="1450.7" y="777.5" font-size="8.5" font-weight="400" fill="#c0c0c0" text-anchor="middle" font-family="Liberation Sans" textLength="34.7" lengthAdjust="spacingAndGlyphs">Approvals</text><rect x="1513.6" y="754.2" width="78.4" height="20.2" fill="#08c4f4" stroke="#333" stroke-width="1.3"/><path d="M1517.1,754.2 v20.2 M1588.5,754.2 v20.2" stroke="#333" stroke-width="1.3"/><text x="1552.2" y="767.1" font-size="8.5" font-weight="700" fill="#222" text-anchor="middle" font-family="Liberation Sans" textLength="59.4" lengthAdjust="spacingAndGlyphs">Implementation</text><rect x="1619.6" y="749.0" width="68.4" height="30.4" fill="#08c4f4" stroke="#333" stroke-width="1.3"/><path d="M1624.1,749.0 v30.4 M1683.5,749.0 v30.4" stroke="#333" stroke-width="1.3"/><text x="1653.0" y="761.8" font-size="8.5" font-weight="400" fill="#333" text-anchor="middle" font-family="Liberation Sans" textLength="47.2" lengthAdjust="spacingAndGlyphs">Follow Ups &amp;</text><text x="1653.0" y="771.9" font-size="8.5" font-weight="400" fill="#333" text-anchor="middle" font-family="Liberation Sans" textLength="33.0" lengthAdjust="spacingAndGlyphs">Feedback</text><path d="M1691.0,769.0 h5 l2,2 v6 h-7 z" fill="#fff" stroke="#8aa0c0" stroke-width="0.8"/><path d="M1695.0,778.0 l3,-3" stroke="#3a80d0" stroke-width="1"/><rect x="1734.5" y="754" width="91.5" height="20" fill="#f6f6f6" stroke="#444" stroke-width="1.3"/><text x="1780.0" y="766.8" font-size="8.5" font-weight="400" fill="#333" text-anchor="middle" font-family="Liberation Sans" textLength="80.5" lengthAdjust="spacingAndGlyphs">Documentationin SFDC</text><rect x="989.4" y="827.0" width="58.3" height="40.6" fill="#f4731e" stroke="#444" stroke-width="1.3"/><path d="M993.9,827.0 v40.6 M1043.2,827.0 v40.6" stroke="#444" stroke-width="1.3"/><text x="1018.0" y="839.6" font-size="8.5" font-weight="400" fill="#8a2a00" text-anchor="middle" font-family="Liberation Sans" textLength="19.7" lengthAdjust="spacingAndGlyphs">Other</text><text x="1017.8" y="850.5" font-size="8.5" font-weight="400" fill="#8a2a00" text-anchor="middle" font-family="Liberation Sans" textLength="35.5" lengthAdjust="spacingAndGlyphs">procedure</text><text x="1018.6" y="860.3" font-size="8.5" font-weight="400" fill="#8a2a00" text-anchor="middle" font-family="Liberation Sans" textLength="19.2" lengthAdjust="spacingAndGlyphs">define</text><rect x="995.0" y="866.0" width="38.0" height="11.0" fill="#fff" stroke="#222" stroke-width="1.3"/><circle cx="1001.0" cy="870.0" r="1.7" fill="none" stroke="#666" stroke-width="0.7"/><path d="M998.0,875.0 q0,-3 3,-3 q3,0 3,3 z" fill="none" stroke="#666" stroke-width="0.7"/><text x="1017.6" y="873.5" font-size="5.5" font-weight="400" fill="#444" text-anchor="middle" font-family="Liberation Sans" textLength="21.3" lengthAdjust="spacingAndGlyphs">R: Steven</text><rect x="1092.0" y="837.0" width="48.8" height="20.0" rx="10.0" fill="#f01010" stroke="#600" stroke-width="1"/><text x="1115.6" y="850.1" font-size="8.5" font-weight="700" fill="#fff" text-anchor="middle" font-family="Liberation Sans" textLength="21.3" lengthAdjust="spacingAndGlyphs">Abort</text><rect x="1206.0" y="832.0" width="58.0" height="30.4" fill="#f4731e" stroke="#444" stroke-width="1.3"/><path d="M1210.5,832.0 v30.4 M1259.5,832.0 v30.4" stroke="#444" stroke-width="1.3"/><text x="1234.5" y="845.3" font-size="8.5" font-weight="400" fill="#8a2a00" text-anchor="middle" font-family="Liberation Sans" textLength="29.8" lengthAdjust="spacingAndGlyphs">Ev move</text><text x="1234.2" y="855.4" font-size="8.5" font-weight="400" fill="#8a2a00" text-anchor="middle" font-family="Liberation Sans" textLength="39.7" lengthAdjust="spacingAndGlyphs">other dates</text><rect x="1211.0" y="862.0" width="38.0" height="10.5" fill="#fff" stroke="#222" stroke-width="1.3"/><circle cx="1217.0" cy="865.8" r="1.7" fill="none" stroke="#666" stroke-width="0.7"/><path d="M1214.0,870.8 q0,-3 3,-3 q3,0 3,3 z" fill="none" stroke="#666" stroke-width="0.7"/><text x="1233.1" y="869.2" font-size="5.5" font-weight="400" fill="#444" text-anchor="middle" font-family="Liberation Sans" textLength="20.2" lengthAdjust="spacingAndGlyphs">R: Steven</text><path d="M1266.0,851.0 h5 l2,2 v6 h-7 z" fill="#fff" stroke="#8aa0c0" stroke-width="0.8"/><path d="M1270.0,860.0 l3,-3" stroke="#3a80d0" stroke-width="1"/><rect x="1026" y="701" width="64" height="12" fill="#fff"/><text x="1057.8" y="709.9" font-size="7.0" font-weight="400" fill="#555" text-anchor="middle" font-family="Liberation Sans" textLength="55.5" lengthAdjust="spacingAndGlyphs">Service does not fit</text><rect x="1084" y="744" width="66" height="22" fill="#fff"/><text x="1115.5" y="752.9" font-size="7.0" font-weight="400" fill="#555" text-anchor="middle" font-family="Liberation Sans" textLength="57.8" lengthAdjust="spacingAndGlyphs">Content or deadline</text><text x="1115.6" y="761.7" font-size="7.0" font-weight="400" fill="#555" text-anchor="middle" font-family="Liberation Sans" textLength="35.0" lengthAdjust="spacingAndGlyphs">Not feasible</text></svg>
<svg class="a" style="left:0px;top:0px;" width="1920" height="1000" viewBox="0 0 1920 1000"><rect x="1800" y="939" width="49" height="31" rx="15" fill="#f4f4f8"/><path d="M1824,963 l-6,-9 a7,7 0 1 1 12,0 z" fill="#888"/><circle cx="1824" cy="951" r="2.5" fill="#f4f4f8"/></svg>
<svg class="a" style="left:0px;top:0px;" width="1920" height="700" viewBox="0 0 1920 700"><path d="M1878,322 h24 l5,5 v25 h-29 z" fill="#e6e6e6" stroke="#c2c2c2" stroke-width="1"/><path d="M1878,352 h24 l5,5 v25 h-29 z" fill="#e6e6e6" stroke="#c2c2c2" stroke-width="1"/><path d="M1878,382 h24 l5,5 v25 h-29 z" fill="#e6e6e6" stroke="#c2c2c2" stroke-width="1"/><path d="M1878,412 h24 l5,5 v25 h-29 z" fill="#e6e6e6" stroke="#c2c2c2" stroke-width="1"/><path d="M1878,442 h24 l5,5 v25 h-29 z" fill="#e6e6e6" stroke="#c2c2c2" stroke-width="1"/><path d="M1878,472 h24 l5,5 v25 h-29 z" fill="#e6e6e6" stroke="#c2c2c2" stroke-width="1"/><path d="M1878,502 h24 l5,5 v25 h-29 z" fill="#e6e6e6" stroke="#c2c2c2" stroke-width="1"/><path d="M1878,532 h24 l5,5 v25 h-29 z" fill="#e6e6e6" stroke="#c2c2c2" stroke-width="1"/><path d="M1878,562 h24 l5,5 v25 h-29 z" fill="#e6e6e6" stroke="#c2c2c2" stroke-width="1"/><path d="M1878,592 h24 l5,5 v25 h-29 z" fill="#e6e6e6" stroke="#c2c2c2" stroke-width="1"/><path d="M1878,622 h24 l5,5 v25 h-29 z" fill="#e6e6e6" stroke="#c2c2c2" stroke-width="1"/><rect x="1884" y="329" width="10" height="10" rx="2" fill="#c83030"/><circle cx="1896" cy="339" r="6" fill="#4aa040"/><path d="M1893,339 l2,2 l4,-4" stroke="#fff" stroke-width="1.5" fill="none"/><rect x="1885" y="360" width="15" height="12" rx="1" fill="none" stroke="#555" stroke-width="1.3"/><rect x="1885" y="360" width="15" height="3" fill="#f0a030"/><path d="M1896,372 h6 M1899,369 v6" stroke="#3a3" stroke-width="1.5"/><circle cx="1892" cy="393" r="3.5" fill="none" stroke="#777" stroke-width="1.3"/><path d="M1884,405 q0,-9 8,-9 q8,0 8,9 z" fill="none" stroke="#777" stroke-width="1.3"/><g fill="none" stroke="#555" stroke-width="1.2"><rect x="1884" y="424" width="6" height="4" rx="2"/><rect x="1893" y="419" width="7" height="4" rx="2"/><rect x="1893" y="428" width="7" height="4" rx="2"/><path d="M1890,426 h3 M1891,426 v-5 h2"/></g><path d="M1897,434 h6 M1900,431 v6" stroke="#3a3" stroke-width="1.5"/><rect x="1884" y="449" width="13" height="12" fill="#7aa6e0"/><path d="M1885,460 l4,-5 l4,5 z" fill="#555"/><rect x="1895" y="453" width="5" height="10" fill="#ccc"/><path d="M1897,463 h6 M1900,460 v6" stroke="#3a3" stroke-width="1.5"/><circle cx="1890" cy="485" r="6" fill="none" stroke="#666" stroke-width="1.8"/><path d="M1894,489 l6,6" stroke="#666" stroke-width="2.2"/><rect x="1884" y="509" width="16" height="16" rx="2" fill="#2c4fb0"/><rect x="1887" y="512" width="10" height="10" fill="none" stroke="#fff" stroke-width="1.2"/><rect x="1883" y="539" width="11" height="9" rx="1" fill="none" stroke="#555" stroke-width="1.2"/><rect x="1888" y="544" width="12" height="10" rx="1" fill="#fff" stroke="#2a6fd0" stroke-width="1.4"/><rect x="1891" y="548" width="6" height="2" fill="#2a6fd0"/><rect x="1889" y="571" width="12" height="11" fill="#41a5ee"/><rect x="1883" y="570" width="10" height="12" fill="#0f5bb5"/><text x="1888" y="580" font-size="9" font-weight="700" text-anchor="middle" fill="#fff" font-family="Liberation Sans">o</text><circle cx="1892" cy="607" r="7" fill="none" stroke="#666" stroke-width="1.3"/><ellipse cx="1892" cy="607" rx="3" ry="7" fill="none" stroke="#666" stroke-width="1.1"/><path d="M1885,607 h14 M1886,603 h12 M1886,611 h12" stroke="#666" stroke-width="1"/><rect x="1883" y="630" width="11" height="13" fill="#1e7e3a"/><text x="1888.5" y="640" font-size="10" font-weight="700" text-anchor="middle" fill="#fff" font-family="Liberation Sans">x</text><path d="M1895,631 v12 M1898,631 v12 M1901,631 v12" stroke="#2a9a4a" stroke-width="1.3" stroke-dasharray="2,1"/></svg>
<div class="a" style="left:790px;top:996px;width:1086px;height:25px;background:#e4e4e4;"></div>
<div class="a" style="left:796px;top:996px;width:1080px;height:1px;background:#fafafa;"></div>
<div class="a" style="left:790px;top:996px;width:1086px;height:1px;background:#c8c8c8;"></div>
<div class="a" style="left:790px;top:1020px;width:1120px;height:1px;background:#d0d0d0;"></div>
<svg class="a" style="left:0px;top:0px;" width="1920" height="1045" viewBox="0 0 1920 1045"><path d="M802,1004 l-5,5 l5,5 z" fill="none" stroke="#888"/><path d="M808,997 h214 v19 q0,3 -3,3 h-193 z" fill="#f8f8f8" stroke="#c0c0c0"/><rect x="838" y="999" width="13" height="16" fill="#3a5bb8"/><path d="M842,1013 l2,-8 h2 l2,8" fill="#ddd"/><rect x="840" y="1002" width="3" height="10" fill="#fff" opacity="0.7"/><path d="M988,1003 v10 h10 M991,1006 l5,5 M996,1008 v3 h-3" stroke="#666" fill="none" stroke-width="1.1"/><path d="M1007,1004 l8,8 M1015,1004 l-8,8" stroke="#444" stroke-width="1.4"/><path d="M1862,1004 l5,5 l-5,5 z" fill="none" stroke="#888"/></svg>
<div class="t" style="left:862.0px;top:1001.7px;font-size:11.5px;color:#1f66c8;font-weight:400;font-family:'Liberation Sans',sans-serif;transform:scaleX(0.9909);transform-origin:0 0;">Service request.mmap</div>
<div class="a" style="left:790px;top:1021px;width:1120px;height:23px;background:#f0f0f0;"></div>
<svg class="a" style="left:0px;top:0px;" width="1920" height="1045" viewBox="0 0 1920 1045"><g fill="none" stroke="#555" stroke-width="1.3"><path d="M1411,1027 h15 l-6,7 v7 l-3,-2 v-5 z" fill="#555"/><path d="M1442,1027 h15 l-6,7 v7 l-3,-2 v-5 z" fill="#555"/><circle cx="1489" cy="1034" r="6.5"/><path d="M1489,1030 v8 M1485,1034 h8"/><rect x="1512" y="1026" width="15" height="15" rx="2" stroke="#bbb"/><rect x="1536" y="1026" width="15" height="15" rx="2"/><path d="M1539,1030 h8 M1539,1033 h5 M1539,1036 h8"/><rect x="1559" y="1026" width="15" height="15" rx="2"/><path d="M1559,1030 h15"/><rect x="1583" y="1026" width="15" height="15" rx="2"/><circle cx="1589" cy="1032" r="3"/><circle cx="1593" cy="1036" r="3"/><rect x="1607" y="1026" width="15" height="15" rx="2"/><path d="M1610,1038 l8,-8 l2,2 l-8,8 z"/><rect x="1632" y="1026" width="15" height="15" rx="2"/><path d="M1635,1030 h8 M1635,1033 h8 M1635,1036 h6"/><path d="M1700,1034 h8 M1815,1034 h9 M1819.5,1029.5 v9"/><rect x="1833" y="1026" width="16" height="15"/><path d="M1837,1034 h8 M1841,1030 v8"/></g><path d="M1428,1033 l2.5,3 l2.5,-3 z M1459,1033 l2.5,3 l2.5,-3 z M1498,1033 l2.5,3 l2.5,-3 z M1881,1033 l2.5,3 l2.5,-3 z" fill="#444"/><text x="1566.5" y="1039" font-size="7" font-weight="700" text-anchor="middle" fill="#555" font-family="Liberation Sans">24</text><rect x="1718" y="1033.5" width="88" height="1" fill="#999"/><rect x="1735" y="1027" width="6" height="13" fill="#f4f4f4" stroke="#888"/><rect x="1863" y="1027" width="15" height="14" fill="none" stroke="#555" stroke-width="1.3"/><rect x="1863" y="1027" width="8" height="14" fill="#555"/><g fill="#aaa"><rect x="1903" y="1030" width="1.5" height="1.5"/><rect x="1900" y="1033" width="1.5" height="1.5"/><rect x="1903" y="1033" width="1.5" height="1.5"/><rect x="1897" y="1036" width="1.5" height="1.5"/><rect x="1900" y="1036" width="1.5" height="1.5"/><rect x="1903" y="1036" width="1.5" height="1.5"/></g></svg>
<div class="t" style="left:1660.0px;top:1026.5px;font-size:12px;color:#333;font-weight:400;font-family:'Liberation Sans',sans-serif;transform:scaleX(0.8775);transform-origin:0 0;">47 %</div>
<div class="a" style="left:789px;top:1043px;width:1122px;height:2px;background:#1d5fc8;"></div>
<div class="a" style="left:1911px;top:614px;width:9px;height:374px;background:#2d2f33;"></div>
<div class="a" style="left:1911px;top:988px;width:9px;height:5px;background:#454545;"></div>
<div class="a" style="left:1911px;top:993px;width:9px;height:1px;background:#8a8a8a;"></div>
<div class="a" style="left:1911px;top:994px;width:8px;height:36px;background:linear-gradient(90deg,#c8ccd6,#e8e8ea)"></div>
<div class="a" style="left:1918px;top:994px;width:2px;height:36px;background:#ffffff;"></div>
<div class="a" style="left:1911px;top:1030px;width:9px;height:20px;background:#454545;"></div>
<div class="a" style="left:790px;top:1045px;width:1111px;height:5px;background:#41454f;"></div>
<div class="a" style="left:1819px;top:1045px;width:82px;height:5px;background:#d8dce4;"></div>
<svg class="a" style="left:0px;top:0px;" width="1920" height="620" viewBox="0 0 1920 620"><rect x="1913" y="566" width="6" height="2" fill="#ddd"/><path d="M1917,577 q-4,-3 -4,3 v5 q0,4 4,3" stroke="#aaa" stroke-width="1.5" fill="none"/><rect x="1912" y="582" width="6" height="8" fill="#3d8ef0" opacity="0.8"/><path d="M1913,597 v12 M1913,600 h5 M1913,608 h5" stroke="#3d8ef0" stroke-width="1.5"/><rect x="1912" y="405" width="6" height="8" fill="#bbb"/><rect x="1912" y="427" width="6" height="8" fill="#bbb"/><path d="M1912,458 l6,-8 v8 z" fill="#bbb"/><rect x="1911" y="461" width="9" height="18" fill="#333"/><path d="M1913,466 h6 M1913,469 h6" stroke="#ddd" stroke-width="1" stroke-dasharray="1,1"/><path d="M1913,482 v8 h5" stroke="#3d8ef0" stroke-width="1.5" fill="none"/><rect x="1912" y="492" width="6" height="8" fill="#bbb"/><path d="M1913,506 v8 h5" stroke="#3d8ef0" stroke-width="1.5" fill="none"/><rect x="1912" y="528" width="6" height="9" fill="#bbb"/><path d="M1913,543 v8 h5" stroke="#3d8ef0" stroke-width="1.5" fill="none"/><path d="M1913,243 v10 M1913,243 h4 M1913,253 h4" stroke="#3d8ef0" stroke-width="1.3" stroke-dasharray="2,1.5" fill="none"/><path d="M1913,283 l5,-9 v9 z" fill="#3d8ef0"/><path d="M1912,296 h2 M1915,296 h4" stroke="#e04040" stroke-width="1.5"/><path d="M1913,326 l5,-12" stroke="#ccc" stroke-width="1.2"/><path d="M1913,333 h5 v10 h-5" stroke="#ccc" stroke-width="1.3" fill="none"/><path d="M1913,357 h5 v10 h-5" stroke="#ccc" stroke-width="1.3" fill="none"/><path d="M1919,380 l-5,4 l5,4" stroke="#ccc" stroke-width="1.2" fill="none"/></svg>
</div></body></html>
